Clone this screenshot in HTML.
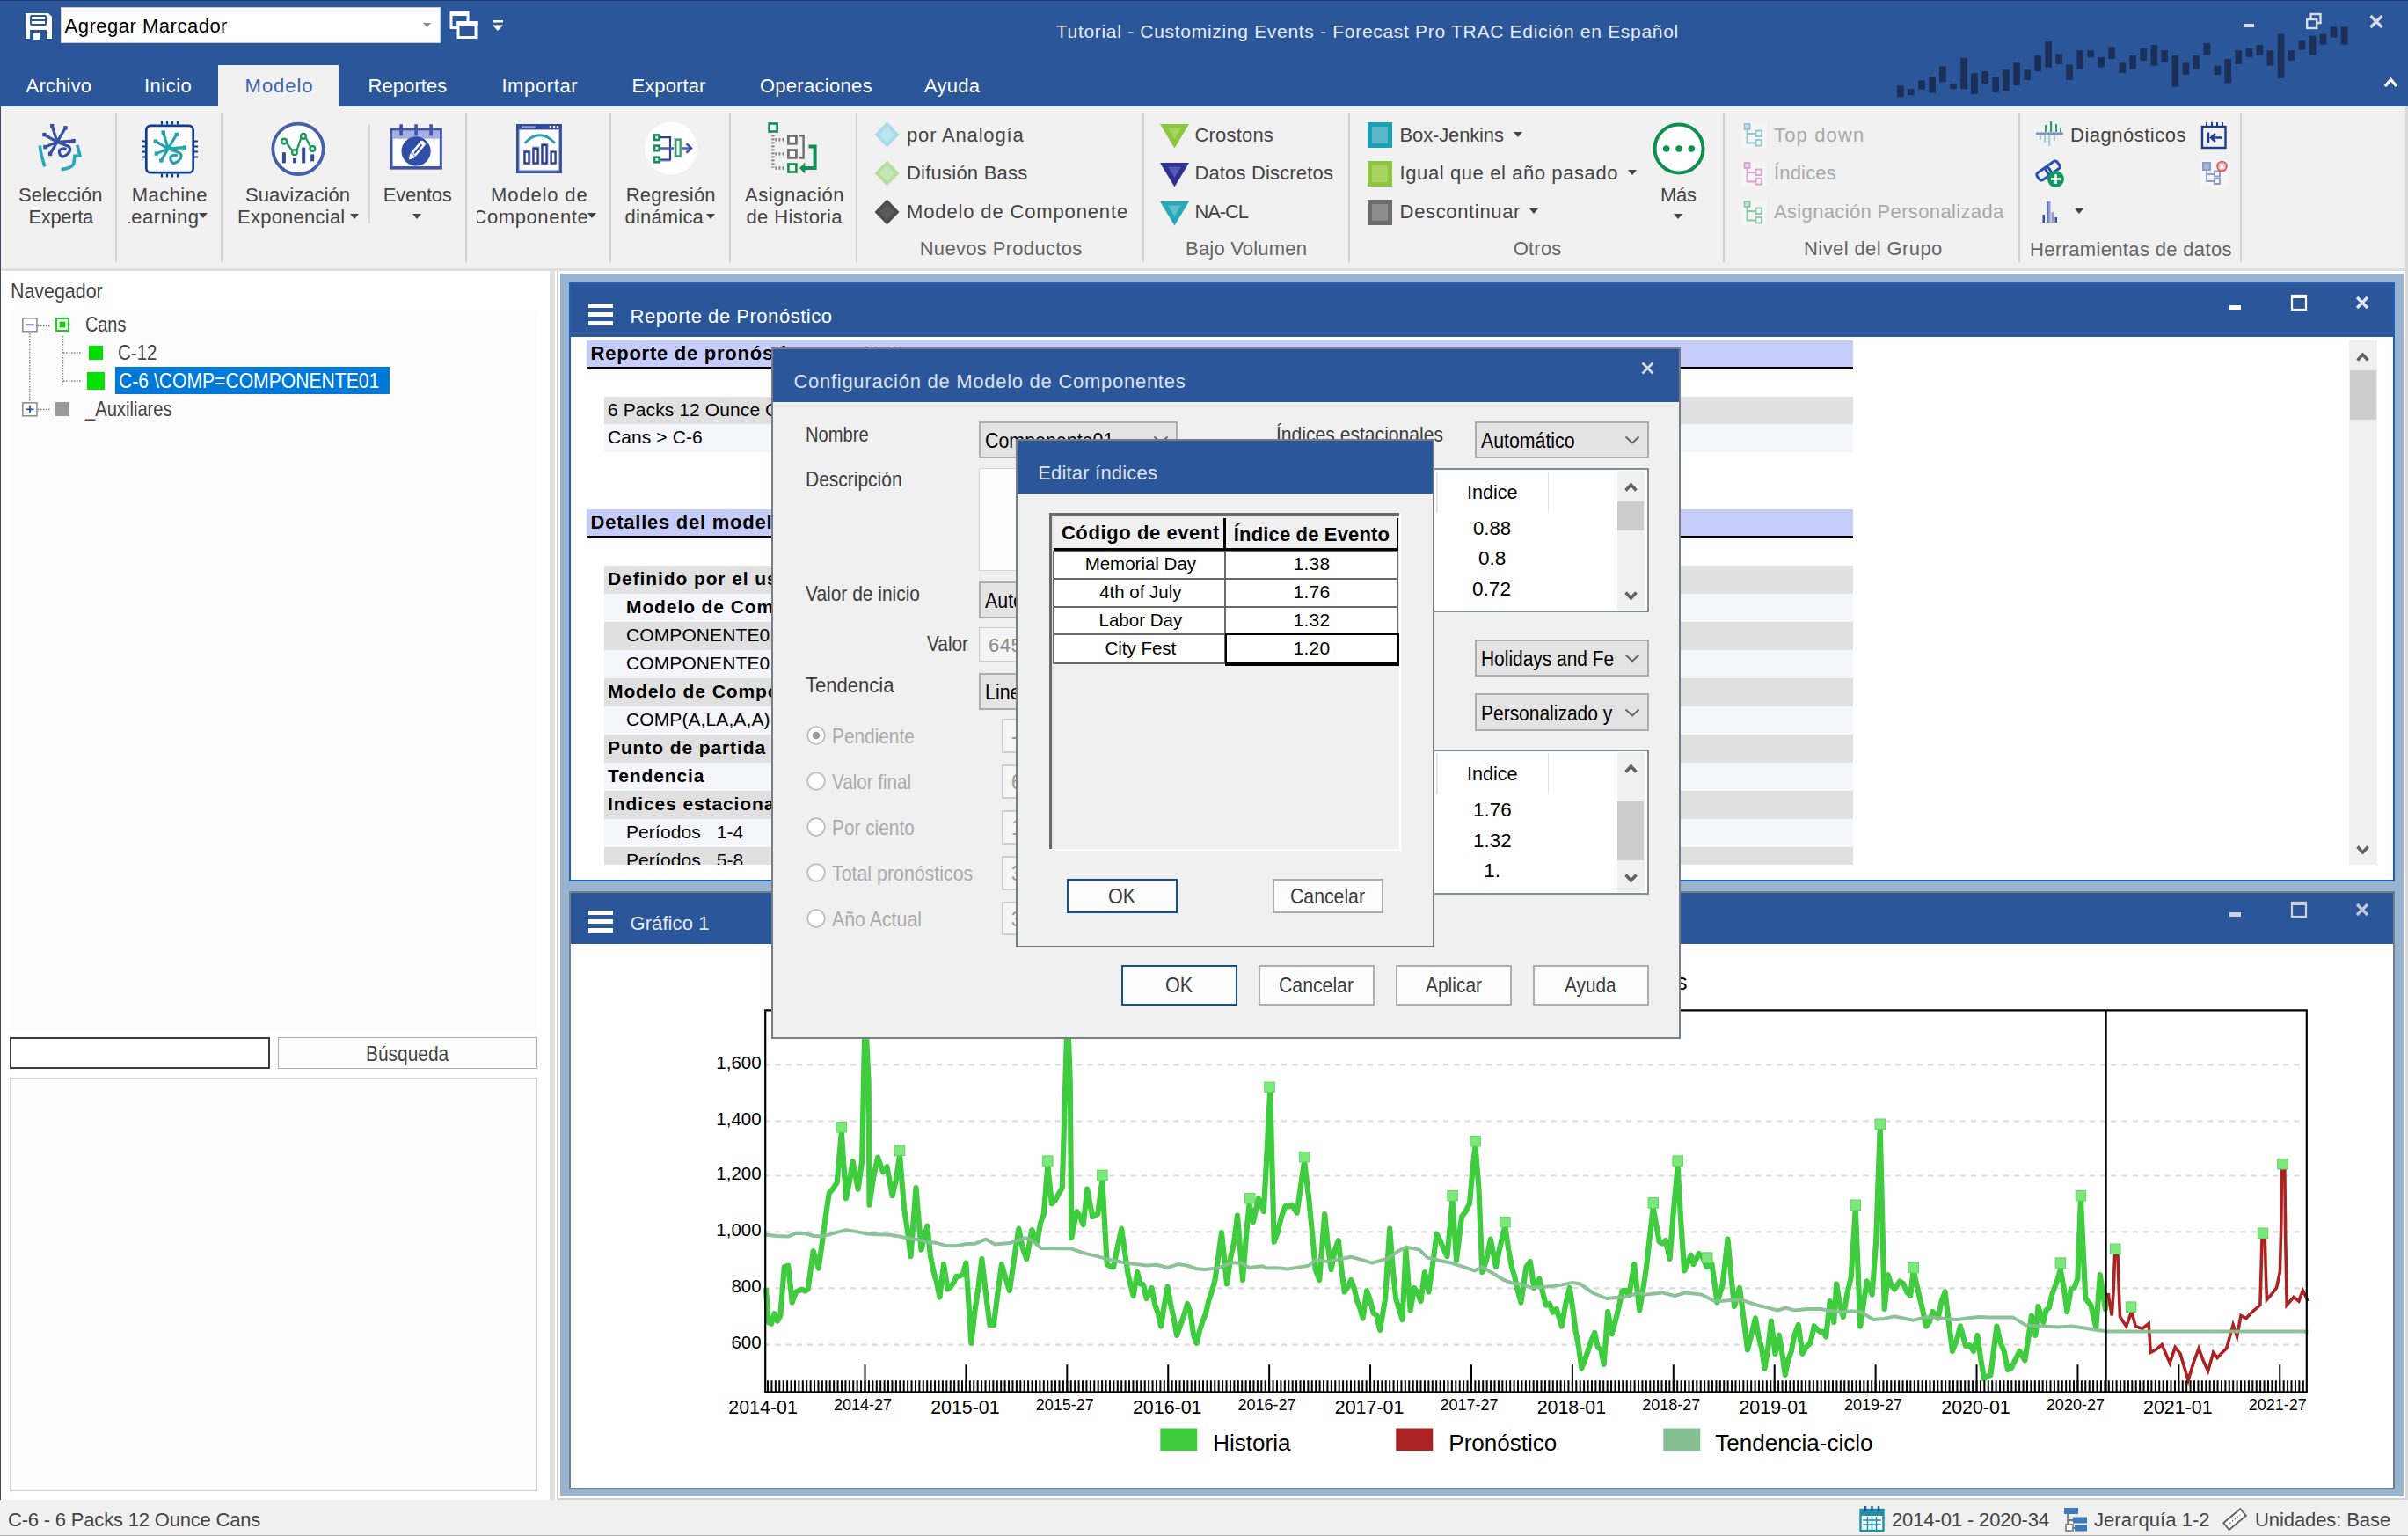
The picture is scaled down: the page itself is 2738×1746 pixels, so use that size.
<!DOCTYPE html>
<html><head><meta charset="utf-8"><title>Forecast Pro TRAC</title>
<style>
html,body{margin:0;padding:0}
body{width:2738px;height:1746px;position:relative;overflow:hidden;background:#fff;font-family:"Liberation Sans",sans-serif;}
.a{position:absolute}
svg{display:block;overflow:visible}
</style></head><body>
<!-- p1_title -->
<div class="a" style="left:0px;top:0px;width:2738px;height:121px;background:#2B579A;"></div>
<div class="a" style="left:0px;top:0px;width:2738px;height:1px;background:#1E3E70;"></div>
<svg class="a" style="left:28px;top:14px" width="32" height="31" viewBox="0 0 32 31">
<path d="M1 1h26l4 4v25H1z" fill="#fff"/>
<rect x="6" y="3" width="19" height="12" rx="2" fill="#2B579A"/>
<rect x="8" y="5" width="15" height="3" fill="#fff"/><rect x="8" y="10" width="15" height="3" fill="#fff"/>
<rect x="6" y="20" width="19" height="11" fill="#2B579A"/><rect x="10" y="23" width="7" height="8" fill="#fff"/>
</svg>
<div class="a" style="left:69px;top:8px;width:432px;height:41px;background:#fff;box-sizing:border-box;border:1px solid #C6CCD8;"></div>
<div class="a" style="top:15px;font-size:22px;line-height:29px;color:#000;white-space:pre;letter-spacing:0.51px;left:73.5px;">Agregar Marcador</div>
<svg class="a" style="left:481px;top:25.500px" width="9" height="5"><path d="M0 0h9l-4.500 5z" fill="#8A8A8A"/></svg>
<svg class="a" style="left:511px;top:12px" width="33" height="33" viewBox="0 0 33 33">
<rect x="2" y="2.5" width="19" height="17" fill="none" stroke="#fff" stroke-width="3"/><rect x="1" y="1" width="21" height="5" fill="#fff"/>
<rect x="10" y="13.5" width="20" height="17" fill="#2B579A" stroke="#fff" stroke-width="3"/><rect x="8.5" y="12" width="23" height="5" fill="#fff"/>
</svg>
<svg class="a" style="left:559px;top:22px" width="14" height="14"><rect x="1" y="1" width="12" height="2.5" fill="#fff"/><path d="M1 6.5h12l-6 6.5z" fill="#fff"/></svg>
<div class="a" style="top:21.5px;font-size:21px;line-height:27px;color:#E6EAF1;white-space:pre;letter-spacing:0.7px;left:1200.75px;">Tutorial - Customizing Events - Forecast Pro TRAC Edición en Español</div>
<svg class="a" style="left:2118px;top:0" width="620" height="121" fill="#1B2F58"><rect x="39.1" y="97.3" width="7.7" height="12.9"/><rect x="51.0" y="101.2" width="7.7" height="7.0"/><rect x="63.1" y="91.4" width="7.7" height="10.3"/><rect x="75.2" y="87.5" width="7.7" height="18.0"/><rect x="87.0" y="75.4" width="7.7" height="18.0"/><rect x="99.1" y="95.3" width="7.7" height="5.9"/><rect x="111.2" y="65.7" width="7.7" height="35.5"/><rect x="123.1" y="83.2" width="7.7" height="23.7"/><rect x="135.2" y="81.1" width="7.7" height="14.2"/><rect x="147.3" y="87.5" width="7.7" height="17.5"/><rect x="159.1" y="79.3" width="7.7" height="23.7"/><rect x="171.2" y="71.3" width="7.7" height="25.7"/><rect x="183.3" y="79.3" width="7.7" height="11.6"/><rect x="195.2" y="63.1" width="7.7" height="18.0"/><rect x="207.3" y="47.1" width="7.7" height="29.6"/><rect x="219.4" y="61.3" width="7.7" height="11.6"/><rect x="231.2" y="73.4" width="7.7" height="17.5"/><rect x="243.3" y="57.2" width="7.7" height="21.4"/><rect x="255.4" y="57.2" width="7.7" height="8.0"/><rect x="267.3" y="65.1" width="7.7" height="11.6"/><rect x="279.4" y="53.3" width="7.7" height="13.6"/><rect x="291.5" y="71.3" width="7.7" height="11.6"/><rect x="303.3" y="63.1" width="7.7" height="15.4"/><rect x="315.4" y="54.8" width="7.7" height="14.2"/><rect x="327.5" y="51.0" width="7.7" height="23.7"/><rect x="339.3" y="57.2" width="7.7" height="13.6"/><rect x="351.5" y="63.1" width="7.7" height="35.5"/><rect x="363.6" y="71.3" width="7.7" height="13.6"/><rect x="375.4" y="63.1" width="7.7" height="15.4"/><rect x="387.5" y="48.9" width="7.7" height="13.6"/><rect x="399.6" y="74.7" width="7.7" height="10.3"/><rect x="411.4" y="66.9" width="7.7" height="27.8"/><rect x="423.5" y="57.2" width="7.7" height="15.7"/><rect x="435.6" y="54.8" width="7.7" height="10.0"/><rect x="447.5" y="51.0" width="7.7" height="11.6"/><rect x="459.6" y="57.2" width="7.7" height="17.5"/><rect x="471.7" y="38.6" width="7.7" height="50.2"/><rect x="483.5" y="57.2" width="7.7" height="11.6"/><rect x="495.6" y="46.3" width="7.7" height="10.3"/><rect x="507.7" y="40.7" width="7.7" height="21.9"/><rect x="519.6" y="38.6" width="7.7" height="12.1"/><rect x="531.7" y="30.4" width="7.7" height="12.1"/><rect x="543.8" y="30.4" width="7.7" height="20.3"/></svg>
<div class="a" style="left:2551px;top:26.5px;width:12px;height:4.5px;background:#D8DCE4;"></div>
<svg class="a" style="left:2621px;top:14px" width="20" height="20"><rect x="6.5" y="2" width="11" height="10" fill="none" stroke="#D8DCE4" stroke-width="2.4"/><rect x="2.2" y="8" width="11" height="10" fill="#2B579A" stroke="#D8DCE4" stroke-width="2.4"/></svg>
<svg class="a" style="left:2694px;top:17px" width="16" height="15"><path d="M1.5 1l13 13M14.5 1l-13 13" stroke="#D8DCE4" stroke-width="3.2"/></svg>
<svg class="a" style="left:2711px;top:88px" width="15" height="11"><path d="M1 10l6.5-7.5 6.500 7.5" fill="none" stroke="#fff" stroke-width="3.4"/></svg>
<div class="a" style="left:247.5px;top:73.5px;width:137.5px;height:48px;background:#F1F1F1;"></div>
<div class="a" style="top:83px;font-size:22px;line-height:29px;color:#fff;white-space:pre;letter-spacing:0.19px;left:29.6px;">Archivo</div>
<div class="a" style="top:83px;font-size:22px;line-height:29px;color:#fff;white-space:pre;letter-spacing:0.49px;left:164px;">Inicio</div>
<div class="a" style="top:83px;font-size:22px;line-height:29px;color:#3B66B0;white-space:pre;letter-spacing:0.97px;left:278.6px;">Modelo</div>
<div class="a" style="top:83px;font-size:22px;line-height:29px;color:#fff;white-space:pre;letter-spacing:0.1px;left:418.4px;">Reportes</div>
<div class="a" style="top:83px;font-size:22px;line-height:29px;color:#fff;white-space:pre;letter-spacing:0.61px;left:570.4px;">Importar</div>
<div class="a" style="top:83px;font-size:22px;line-height:29px;color:#fff;white-space:pre;letter-spacing:0.13px;left:718.4px;">Exportar</div>
<div class="a" style="top:83px;font-size:22px;line-height:29px;color:#fff;white-space:pre;letter-spacing:0.3px;left:863.9px;">Operaciones</div>
<div class="a" style="top:83px;font-size:22px;line-height:29px;color:#fff;white-space:pre;letter-spacing:0.24px;left:1051px;">Ayuda</div>
<!-- p2_ribbon -->
<div class="a" style="left:0px;top:121px;width:2738px;height:184px;background:#F1F1F1;"></div>
<div class="a" style="left:0px;top:305px;width:2738px;height:3.7px;background:linear-gradient(#E2E2E2,#D6D6D6);"></div>
<div class="a" style="left:131px;top:128px;width:2px;height:170px;background:#D2D2D2;"></div>
<div class="a" style="left:251px;top:128px;width:2px;height:170px;background:#D2D2D2;"></div>
<div class="a" style="left:529.4px;top:128px;width:2px;height:170px;background:#D2D2D2;"></div>
<div class="a" style="left:692.8px;top:128px;width:2px;height:170px;background:#D2D2D2;"></div>
<div class="a" style="left:829px;top:128px;width:2px;height:170px;background:#D2D2D2;"></div>
<div class="a" style="left:973px;top:128px;width:2px;height:170px;background:#D2D2D2;"></div>
<div class="a" style="left:1299px;top:128px;width:2px;height:170px;background:#D2D2D2;"></div>
<div class="a" style="left:1533px;top:128px;width:2px;height:170px;background:#D2D2D2;"></div>
<div class="a" style="left:1959px;top:128px;width:2px;height:170px;background:#D2D2D2;"></div>
<div class="a" style="left:2295px;top:128px;width:2px;height:170px;background:#D2D2D2;"></div>
<div class="a" style="left:2546.8px;top:128px;width:2px;height:170px;background:#D2D2D2;"></div>
<div class="a" style="left:419px;top:141px;width:2px;height:113px;background:#D8D8D8;"></div>
<div class="a" style="top:206.5px;font-size:22px;line-height:29px;color:#444;white-space:pre;letter-spacing:0.02px;left:21px;">Selección</div>
<div class="a" style="top:232.3px;font-size:22px;line-height:29px;color:#444;white-space:pre;letter-spacing:-0.36px;left:32.5px;">Experta</div>
<div class="a" style="top:206.5px;font-size:22px;line-height:29px;color:#444;white-space:pre;letter-spacing:0.43px;left:149.8px;">Machine</div>
<div class="a" style="top:206.5px;font-size:22px;line-height:29px;color:#444;white-space:pre;letter-spacing:0.03px;left:279px;">Suavización</div>
<div class="a" style="top:232.3px;font-size:22px;line-height:29px;color:#444;white-space:pre;letter-spacing:0.24px;left:270px;">Exponencial</div>
<div class="a" style="top:206.5px;font-size:22px;line-height:29px;color:#444;white-space:pre;letter-spacing:-0.23px;left:435.7px;">Eventos</div>
<div class="a" style="top:206.5px;font-size:22px;line-height:29px;color:#444;white-space:pre;letter-spacing:0.86px;left:558px;">Modelo de</div>
<div class="a" style="top:206.5px;font-size:22px;line-height:29px;color:#444;white-space:pre;letter-spacing:0.2px;left:711.7px;">Regresión</div>
<div class="a" style="top:232.3px;font-size:22px;line-height:29px;color:#444;white-space:pre;letter-spacing:0.17px;left:710.6px;">dinámica</div>
<div class="a" style="top:206.5px;font-size:22px;line-height:29px;color:#444;white-space:pre;letter-spacing:0.54px;left:847px;">Asignación</div>
<div class="a" style="top:232.3px;font-size:22px;line-height:29px;color:#444;white-space:pre;letter-spacing:0.38px;left:848.5px;">de Historia</div>
<div class="a" style="top:206.5px;font-size:22px;line-height:29px;color:#444;white-space:pre;letter-spacing:-0.29px;left:1888px;">Más</div>
<div class="a" style="left:144.5px;top:232px;width:82px;height:30px;overflow:hidden"><div class="a" style="right:0;top:0;font-size:22px;line-height:29px;color:#444;white-space:pre;letter-spacing:0.55px">Learning</div></div>
<div class="a" style="left:542px;top:232px;width:127px;height:30px;overflow:hidden"><div class="a" style="right:-12px;top:0;font-size:22px;line-height:29px;color:#444;white-space:pre;letter-spacing:0.6px">Componentes</div></div>
<svg class="a" style="left:226px;top:241.5px" width="10" height="6"><path d="M0 0h10l-5 6z" fill="#444"/></svg>
<svg class="a" style="left:397.5px;top:242.6px" width="10" height="6"><path d="M0 0h10l-5 6z" fill="#444"/></svg>
<svg class="a" style="left:468.6px;top:242.6px" width="10" height="6"><path d="M0 0h10l-5 6z" fill="#444"/></svg>
<svg class="a" style="left:667.5px;top:241.5px" width="10" height="6"><path d="M0 0h10l-5 6z" fill="#444"/></svg>
<svg class="a" style="left:803px;top:242.6px" width="10" height="6"><path d="M0 0h10l-5 6z" fill="#444"/></svg>
<svg class="a" style="left:1902.6px;top:242.6px" width="10" height="6"><path d="M0 0h10l-5 6z" fill="#444"/></svg>
<div class="a" style="top:138.5px;font-size:22px;line-height:29px;color:#444;white-space:pre;letter-spacing:0.83px;left:1031px;">por Analogía</div>
<div class="a" style="top:181.8px;font-size:22px;line-height:29px;color:#444;white-space:pre;letter-spacing:0.23px;left:1031px;">Difusión Bass</div>
<div class="a" style="top:225.5px;font-size:22px;line-height:29px;color:#444;white-space:pre;letter-spacing:0.86px;left:1031px;">Modelo de Componente</div>
<div class="a" style="top:268px;font-size:22px;line-height:29px;color:#666;white-space:pre;letter-spacing:0.33px;left:1045.64px;">Nuevos Productos</div>
<svg class="a" style="left:994px;top:138px" width="29" height="30"><path d="M14.500 0.500L28.500 15 14.500 29.500 0.500 15z" fill="#A8DCEB"/><path d="M14.500 6L23 15 14.500 24 6 15z" fill="#BCE6F1"/></svg>
<svg class="a" style="left:994px;top:182px" width="29" height="30"><path d="M14.500 0.500L28.500 15 14.500 29.500 0.500 15z" fill="#B7DDA2"/><path d="M14.500 6L23 15 14.500 24 6 15z" fill="#C6E6B4"/></svg>
<svg class="a" style="left:994px;top:226px" width="29" height="30"><path d="M14.500 0.500L28.500 15 14.500 29.500 0.500 15z" fill="#4D4D4D"/><path d="M14.500 6L23 15 14.500 24 6 15z" fill="#5A5A5A"/></svg>
<svg class="a" style="left:1319px;top:141.3px" width="33" height="28"><path d="M0 0h33L16.500 27.500z" fill="#8DC63F"/><path d="M9 4.500h15L16.500 17z" fill="#A5D45F"/></svg>
<svg class="a" style="left:1319px;top:185.3px" width="33" height="28"><path d="M0 0h33L16.500 27.500z" fill="#2E3192"/><path d="M9 4.500h15L16.500 17z" fill="#5558B5"/></svg>
<svg class="a" style="left:1319px;top:229px" width="33" height="28"><path d="M0 0h33L16.500 27.500z" fill="#27AAB8"/><path d="M9 4.500h15L16.500 17z" fill="#5BC2CC"/></svg>
<div class="a" style="top:138.5px;font-size:22px;line-height:29px;color:#444;white-space:pre;letter-spacing:0.2px;left:1358.4px;">Crostons</div>
<div class="a" style="top:181.8px;font-size:22px;line-height:29px;color:#444;white-space:pre;letter-spacing:0.16px;left:1358.4px;">Datos Discretos</div>
<div class="a" style="top:225.5px;font-size:22px;line-height:29px;color:#444;white-space:pre;letter-spacing:-1.08px;left:1358.4px;">NA-CL</div>
<div class="a" style="top:268.2px;font-size:22px;line-height:29px;color:#666;white-space:pre;letter-spacing:0.19px;left:1348.07px;">Bajo Volumen</div>
<div class="a" style="left:1554.6px;top:139px;width:28.5px;height:28.5px;background:#1BA1B5;"></div>
<div class="a" style="left:1559.6px;top:144px;width:18.5px;height:18.5px;background:#5BB8C8;"></div>
<div class="a" style="left:1554.6px;top:183px;width:28.5px;height:28.5px;background:#8DC63F;"></div>
<div class="a" style="left:1559.6px;top:188px;width:18.5px;height:18.5px;background:#A6D363;"></div>
<div class="a" style="left:1554.6px;top:227px;width:28.5px;height:28.5px;background:#6D6D6D;"></div>
<div class="a" style="left:1559.6px;top:232px;width:18.5px;height:18.5px;background:#8C8C8C;"></div>
<div class="a" style="top:138.5px;font-size:22px;line-height:29px;color:#444;white-space:pre;letter-spacing:-0.15px;left:1591.6px;">Box-Jenkins</div>
<div class="a" style="top:181.8px;font-size:22px;line-height:29px;color:#444;white-space:pre;letter-spacing:0.59px;left:1591.6px;">Igual que el año pasado</div>
<div class="a" style="top:225.5px;font-size:22px;line-height:29px;color:#444;white-space:pre;letter-spacing:0.65px;left:1591.6px;">Descontinuar</div>
<svg class="a" style="left:1721px;top:149.5px" width="10" height="6"><path d="M0 0h10l-5 6z" fill="#444"/></svg>
<svg class="a" style="left:1851px;top:193px" width="10" height="6"><path d="M0 0h10l-5 6z" fill="#444"/></svg>
<svg class="a" style="left:1739px;top:237px" width="10" height="6"><path d="M0 0h10l-5 6z" fill="#444"/></svg>
<div class="a" style="top:268.2px;font-size:22px;line-height:29px;color:#666;white-space:pre;letter-spacing:0.24px;left:1720.63px;">Otros</div>
<svg class="a" style="left:1878px;top:138px" width="62" height="62"><circle cx="31" cy="31" r="27.500" fill="#fff" stroke="#0E8F4F" stroke-width="4"/><circle cx="16.700" cy="31" r="3.800" fill="#0E8F4F"/><circle cx="31" cy="31" r="3.800" fill="#0E8F4F"/><circle cx="45.300" cy="31" r="3.800" fill="#0E8F4F"/></svg>
<div class="a" style="top:138.5px;font-size:22px;line-height:29px;color:#A9A9A9;white-space:pre;letter-spacing:1.15px;left:2017px;">Top down</div>
<div class="a" style="top:181.8px;font-size:22px;line-height:29px;color:#A9A9A9;white-space:pre;letter-spacing:0.18px;left:2017px;">Índices</div>
<div class="a" style="top:225.5px;font-size:22px;line-height:29px;color:#A9A9A9;white-space:pre;letter-spacing:0.35px;left:2017px;">Asignación Personalizada</div>
<div class="a" style="top:268.2px;font-size:22px;line-height:29px;color:#666;white-space:pre;letter-spacing:0.4px;left:2051.09px;">Nivel del Grupo</div>
<svg class="a" style="left:1980px;top:139px" width="29" height="29" fill="none" stroke="#8CC7D3" stroke-width="1.800"><rect x="0" y="0" width="29" height="29" fill="#F5F5F5" stroke="none"/><rect x="3.500" y="2" width="6" height="6" fill="#8CC7D3" fill-opacity=".35"/><path d="M6.500 8v15.500h10M6.500 13h10"/><rect x="16.500" y="9.500" width="6.500" height="6.500"/><rect x="16.500" y="20" width="6.500" height="6.500"/></svg>
<svg class="a" style="left:1980px;top:183px" width="29" height="29" fill="none" stroke="#DDA0D0" stroke-width="1.800"><rect x="0" y="0" width="29" height="29" fill="#F5F5F5" stroke="none"/><rect x="3.500" y="2" width="6" height="6" fill="#DDA0D0" fill-opacity=".35"/><path d="M6.500 8v15.500h10M6.500 13h10"/><rect x="16.500" y="9.500" width="6.500" height="6.500"/><rect x="16.500" y="20" width="6.500" height="6.500"/></svg>
<svg class="a" style="left:1980px;top:227px" width="29" height="29" fill="none" stroke="#8CC4A8" stroke-width="1.800"><rect x="0" y="0" width="29" height="29" fill="#F5F5F5" stroke="none"/><rect x="3.500" y="2" width="6" height="6" fill="#8CC4A8" fill-opacity=".35"/><path d="M6.500 8v15.500h10M6.500 13h10"/><rect x="16.500" y="9.500" width="6.500" height="6.500"/><rect x="16.500" y="20" width="6.500" height="6.500"/></svg>
<div class="a" style="top:138.5px;font-size:22px;line-height:29px;color:#444;white-space:pre;letter-spacing:0.5px;left:2354px;">Diagnósticos</div>
<div class="a" style="top:268.5px;font-size:22px;line-height:29px;color:#666;white-space:pre;letter-spacing:0.34px;left:2308.12px;">Herramientas de datos</div>
<svg class="a" style="left:2315px;top:137px" width="32" height="30">
<rect x="0" y="13.500" width="31" height="2.600" fill="#7F8FC0"/>
<g fill="#2E9E6B"><rect x="10" y="5" width="2" height="8"/><rect x="16" y="1" width="2.200" height="12"/><rect x="22" y="4" width="2" height="9"/><rect x="27" y="8" width="2" height="5"/></g>
<g fill="#9AD0DC"><rect x="4" y="17" width="2" height="5"/><rect x="9" y="17" width="2" height="8"/><rect x="14" y="17" width="2.200" height="12"/><rect x="20" y="17" width="2" height="6"/></g>
</svg>
<svg class="a" style="left:2502px;top:138px" width="31" height="32" fill="none" stroke="#1F3A93" stroke-width="2.400">
<rect x="2" y="6" width="26.500" height="24"/><path d="M7 1v5M13 1v5M19 1v5M25 1v5" stroke-width="2"/>
<path d="M9 12.500v12M25 18.500H12M17 14l-5 4.500 5 4.500"/></svg>
<svg class="a" style="left:2314px;top:180px" width="34" height="34" fill="none">
<g transform="rotate(-35 15 14)" stroke="#2A4FB0" stroke-width="3"><rect x="1" y="9" width="16" height="10" rx="3"/><rect x="13" y="9" width="16" height="10" rx="3"/></g>
<circle cx="23.500" cy="23.500" r="9.500" fill="#149660"/><path d="M23.500 18v11M18 23.500h11" stroke="#fff" stroke-width="2.400"/></svg>
<svg class="a" style="left:2502px;top:182px" width="32" height="30" fill="none" stroke="#8C9CCB" stroke-width="2">
<rect x="0" y="0" width="32" height="30" fill="#F6F6F6" stroke="none"/>
<rect x="3" y="3" width="8" height="8" fill="#AAB6DC"/><path d="M7 11v13h9M7 16h9"/><rect x="16" y="12.500" width="6" height="6"/><rect x="16" y="21" width="6" height="6"/>
<circle cx="24.500" cy="7" r="5.500" fill="#F0B4B4" stroke="#D06060" stroke-width="1.600"/><path d="M22 4.500l5 5M27 4.500l-5 5" stroke="#fff" stroke-width="1.600"/></svg>
<svg class="a" style="left:2322px;top:228px" width="18" height="25"><rect x="0.500" y="16" width="2.500" height="9" fill="#2A4FA0"/><rect x="5" y="1" width="4.500" height="24" fill="#8C9CCB"/><rect x="5" y="1" width="2" height="24" fill="#5A72B8"/><rect x="10.500" y="13" width="2.500" height="12" fill="#8C9CCB"/><rect x="14.500" y="19" width="2.500" height="6" fill="#2A4FA0"/></svg>
<svg class="a" style="left:2358.7px;top:237px" width="10" height="6"><path d="M0 0h10l-5 6z" fill="#444"/></svg>
<!-- p3_icons -->
<svg class="a" style="left:40px;top:139px" width="58" height="58" fill="none" stroke-linecap="butt" stroke-linejoin="miter">
<g stroke="#2AA6B4" stroke-width="3.600">
<path d="M5.300 26.300C6 35 8.500 43 10.900 50.300"/>
<path d="M47.800 25.900L51 38.200H45L43.700 47.500Q40.500 52.600 29.700 53.600"/>
</g><path d="M24.9 22.4L19.2 4.1M24.9 22.4L34.5 6.3M24.9 22.4L10.5 14.1M24.9 22.4L43.6 21.1M24.9 22.4L11.4 28.1M24.9 22.4L17 35.9M24.9 22.4L37.1 26.9Q41.4 29.4 38.7 33.9Q35.4 38.4 30.8 39.2Q26.7 36.4 27.6 31.7Q30.9 28.9 35.4 30.4" fill="none" stroke="#3550A6" stroke-width="3.2" stroke-linecap="butt" stroke-linejoin="round"/><rect x="17" y="1.9" width="4.400" height="4.400" fill="#3550A6" stroke="none"/><rect x="32.3" y="4.1" width="4.400" height="4.400" fill="#3550A6" stroke="none"/><rect x="8.3" y="11.9" width="4.400" height="4.400" fill="#3550A6" stroke="none"/><rect x="41.4" y="18.9" width="4.400" height="4.400" fill="#3550A6" stroke="none"/><rect x="9.2" y="25.9" width="4.400" height="4.400" fill="#3550A6" stroke="none"/><rect x="14.8" y="33.7" width="4.400" height="4.400" fill="#3550A6" stroke="none"/></svg>
<svg class="a" style="left:163px;top:138.500px" width="60" height="62" fill="none">
<g stroke="#0D3C91" stroke-width="2.200"><path d="M21 -1.500v4M21 58.600v4M-2 21.5h4M58 21.5h4"/><path d="M27 -1.500v4M27 58.600v4M-2 27.5h4M58 27.5h4"/><path d="M33 -1.500v4M33 58.600v4M-2 33.5h4M58 33.5h4"/><path d="M39 -1.500v4M39 58.600v4M-2 39.5h4M58 39.5h4"/></g>
<rect x="3.300" y="3.800" width="53.400" height="53.400" rx="5" fill="#fff" stroke="#0D3C91" stroke-width="2.700"/>
<path d="M28.3 29.9L22.6 11.6M28.3 29.9L37.9 13.8M28.3 29.9L13.9 21.6M28.3 29.9L47 28.6M28.3 29.9L14.8 35.6M28.3 29.9L20.4 43.4M28.3 29.9L40.5 34.4Q44.8 36.9 42.1 41.4Q38.8 45.9 34.2 46.7Q30.1 43.9 31 39.2Q34.3 36.4 38.8 37.9" fill="none" stroke="#27A3B0" stroke-width="3.2" stroke-linecap="butt" stroke-linejoin="round"/><rect x="20.4" y="9.4" width="4.400" height="4.400" fill="#27A3B0" stroke="none"/><rect x="35.7" y="11.6" width="4.400" height="4.400" fill="#27A3B0" stroke="none"/><rect x="11.7" y="19.4" width="4.400" height="4.400" fill="#27A3B0" stroke="none"/><rect x="44.8" y="26.4" width="4.400" height="4.400" fill="#27A3B0" stroke="none"/><rect x="12.6" y="33.4" width="4.400" height="4.400" fill="#27A3B0" stroke="none"/><rect x="18.2" y="41.2" width="4.400" height="4.400" fill="#27A3B0" stroke="none"/></svg>
<svg class="a" style="left:307px;top:136.500px" width="64" height="64" fill="none">
<circle cx="32" cy="32.300" r="28.700" stroke="#4660AA" stroke-width="3.800" fill="#fff"/>
<g fill="#2F4C9E"><rect x="13.900" y="36.200" width="4" height="12.200"/><rect x="26.100" y="42.800" width="4" height="5.600"/><rect x="36.200" y="30.600" width="4" height="17.800"/><rect x="46.200" y="38.400" width="4" height="8"/></g>
<path d="M16.100 23.600C21 25 23 34 27.900 36.200C33 34 33 19 37.900 17.900C43 19 43.500 29 48.400 31.900" stroke="#1F9960" stroke-width="2.400"/>
<g fill="#E8FBF0" stroke="#1F9960" stroke-width="2.400"><circle cx="16.100" cy="23.600" r="2.900"/><circle cx="27.900" cy="36.200" r="2.900"/><circle cx="37.900" cy="17.900" r="2.900"/><circle cx="48.400" cy="31.900" r="2.900"/></g></svg>
<svg class="a" style="left:442px;top:139px" width="62" height="56" fill="none">
<rect x="3" y="8.200" width="56.300" height="43.700" fill="#fff" stroke="#3F55A8" stroke-width="3"/>
<rect x="4.500" y="9.700" width="53.300" height="9" fill="#A6AEDF"/>
<rect x="1.500" y="50" width="59.300" height="3.400" fill="#3F55A8"/>
<path d="M14.100 2.300v13M31.100 2.300v13M48.100 2.300v13" stroke="#3F55A8" stroke-width="3.600"/>
<circle cx="31.100" cy="32.900" r="16.600" fill="#2F4FA8"/>
<g transform="rotate(40 31.100 32.900)"><rect x="27.600" y="18.900" width="7" height="21" rx="2.200" fill="#fff"/><path d="M27.600 39.500l3.500 6 3.500-6z" fill="#fff"/><rect x="30.100" y="23" width="2" height="13" fill="#2F4FA8"/><rect x="27.600" y="37.300" width="7" height="1.400" fill="#2F4FA8" fill-opacity=".5"/></g></svg>
<svg class="a" style="left:586px;top:140px" width="55" height="58" fill="none">
<rect x="2.700" y="2.800" width="48.500" height="52.500" fill="#fff" stroke="#2F4C9E" stroke-width="3.400"/>
<rect x="4.400" y="7" width="45.100" height="46.600" fill="none" stroke="#A6B0E6" stroke-width="1.400"/>
<rect x="1" y="1.100" width="51.900" height="6" fill="#2F4C9E"/>
<rect x="7" y="3.300" width="15.800" height="1.700" fill="#8E9ADB"/><rect x="38.800" y="3" width="2.200" height="2.200" fill="#fff"/><rect x="42.900" y="3" width="2.200" height="2.200" fill="#fff"/><rect x="46.900" y="3" width="2.200" height="2.200" fill="#fff"/>
<path d="M10.600 22.700Q27.800 5 45 22.700" stroke="#2AA0B0" stroke-width="3"/>
<g fill="#B4BCF2"><rect x="9.300" y="30.400" width="8.400" height="16.300"/><rect x="19.300" y="26.500" width="8.400" height="20.200"/><rect x="29.300" y="22.600" width="8.400" height="24.100"/></g>
<g stroke="#2F3F8F" stroke-width="2.400" fill="#fff"><rect x="10.500" y="32.600" width="5" height="12.900"/><rect x="20.500" y="28.700" width="5" height="16.800"/><rect x="30.500" y="24.800" width="5" height="20.700"/><rect x="40.600" y="32.600" width="5" height="12.900"/></g></svg>
<svg class="a" style="left:731px;top:137px" width="64" height="64" fill="none">
<circle cx="32" cy="31.600" r="29.800" fill="#fff"/>
<path d="M19 33h35" stroke="#B4BCF2" stroke-width="2"/><path d="M19 46h12" stroke="#B4BCF2" stroke-width="2"/>
<g stroke="#2F3F8F" stroke-width="2.200"><path d="M19 19.200h12v25.300H19"/></g>
<path d="M19 31.400h34" stroke="#4A5AB0" stroke-width="2.200"/><path d="M49.500 26.200l5.500 5.200-5.500 5.200" stroke="#3F50A8" stroke-width="2.600"/>
<rect x="34.900" y="20" width="10.200" height="22.400" fill="#BFDCCD"/>
<rect x="37.400" y="21.800" width="5.200" height="18.600" fill="#EFFFFA" stroke="#3D9970" stroke-width="2.200"/>
<g fill="#D9F5E6" stroke="#1F8A5F" stroke-width="2.600"><rect x="13" y="16.400" width="5.600" height="5.600"/><rect x="13" y="28.600" width="5.600" height="5.600"/><rect x="13" y="41.700" width="5.600" height="5.600"/></g></svg>
<svg class="a" style="left:872px;top:138px" width="60" height="62" fill="none">
<rect x="2.600" y="2.500" width="9" height="9" fill="#F2FFFA" stroke="#168A50" stroke-width="2.600"/>
<path d="M6.900 15.500v37" stroke="#7A7A7A" stroke-width="3.400" stroke-dasharray="1.800 2.200"/>
<path d="M9.500 20.800h12M9.500 36.900h12M9.500 53h12" stroke="#7A7A7A" stroke-width="3.400" stroke-dasharray="1.800 2.200"/>
<rect x="24.400" y="16.500" width="9" height="8.700" fill="#fff" stroke="#6E6E6E" stroke-width="2.800"/>
<rect x="24.400" y="32.600" width="9" height="8.700" fill="#fff" stroke="#6E6E6E" stroke-width="2.800"/>
<path d="M37 16.300h4.600v25.200H37" stroke="#6E6E6E" stroke-width="2.400"/>
<rect x="24.400" y="48.500" width="9" height="9" fill="#F2FFFA" stroke="#168A50" stroke-width="2.600"/>
<path d="M47.500 28.600h7.100v24.400H42" stroke="#0E9050" stroke-width="4"/>
<path d="M37 53l6.300-6.500v13z" fill="#0E9050"/></svg>
<!-- p4_main -->
<div class="a" style="left:0px;top:308px;width:625.5px;height:1397px;background:#fff;"></div>
<div class="a" style="left:0px;top:121px;width:1px;height:1625px;background:#3A4A66;"></div>
<div class="a" style="left:11.7px;top:314.8px;font-size:24px;line-height:31px;color:#444;white-space:pre;transform:scaleX(0.8917);transform-origin:0 50%;">Navegador</div>
<div class="a" style="left:11px;top:353px;width:600px;height:818px;background:#FCFCFC;"></div>
<svg class="a" style="left:20px;top:355px" width="120" height="125" fill="none" stroke="#808080" stroke-width="1.400" stroke-dasharray="1.500 1.500"><path d="M13.800 24v78M23 15.500h14M51.500 27v56M52 46h20M52 78h20M23 110.500h14"/></svg>
<svg class="a" style="left:25px;top:361.2px" width="18" height="17"><rect x="0.800" y="0.800" width="16.200" height="15" fill="#fff" stroke="#919191" stroke-width="1.600"/><path d="M4.500 8.300h9" stroke="#3B50A5" stroke-width="1.800"/></svg>
<svg class="a" style="left:25px;top:456.8px" width="18" height="17"><rect x="0.800" y="0.800" width="16.200" height="15" fill="#fff" stroke="#919191" stroke-width="1.600"/><path d="M4.500 8.300h9" stroke="#3B50A5" stroke-width="1.800"/><path d="M9 3.800v9" stroke="#3B50A5" stroke-width="1.800"/></svg>
<svg class="a" style="left:62.900px;top:360.800px" width="16" height="16"><rect x="1" y="1" width="14" height="14" fill="#fff" stroke="#1FCC1F" stroke-width="2"/><rect x="4.600" y="4.600" width="6.800" height="6.800" fill="#0FD00F"/></svg>
<div class="a" style="left:101.1px;top:393.4px;width:15.8px;height:15.6px;background:#00DD00;"></div>
<div class="a" style="left:99px;top:423.1px;width:20px;height:19.8px;background:#00E200;"></div>
<div class="a" style="left:62.9px;top:457.2px;width:16px;height:15.6px;background:#9A9A9A;"></div>
<div class="a" style="left:97px;top:352.9px;font-size:24px;line-height:31px;color:#444;white-space:pre;transform:scaleX(0.8263);transform-origin:0 50%;">Cans</div>
<div class="a" style="left:134.4px;top:384.6px;font-size:24px;line-height:31px;color:#444;white-space:pre;transform:scaleX(0.8554);transform-origin:0 50%;">C-12</div>
<div class="a" style="left:130.9px;top:417px;width:311.7px;height:31.4px;background:#0078D7;"></div>
<div class="a" style="left:134.6px;top:416.7px;font-size:24px;line-height:31px;color:#fff;white-space:pre;transform:scaleX(0.8799);transform-origin:0 50%;">C-6 \COMP=COMPONENTE01</div>
<div class="a" style="left:97.2px;top:448.8px;font-size:24px;line-height:31px;color:#444;white-space:pre;transform:scaleX(0.8399);transform-origin:0 50%;">_Auxiliares</div>
<div class="a" style="left:11px;top:1179px;width:295.5px;height:35.5px;background:#fff;box-sizing:border-box;border:2px solid #3C3C3C;"></div>
<div class="a" style="left:315.5px;top:1179px;width:295px;height:35.5px;background:#FDFDFD;box-sizing:border-box;border:1.500px solid #ADADAD;"></div>
<div class="a" style="left:415.7px;top:1181.5px;font-size:24px;line-height:31px;color:#444;white-space:pre;transform:scaleX(0.8714);transform-origin:0 50%;">Búsqueda</div>
<div class="a" style="left:11px;top:1225px;width:600px;height:469.8px;background:#FDFDFD;box-sizing:border-box;border:1.800px solid #D0D0D0;"></div>
<div class="a" style="left:625.3px;top:308px;width:5.7px;height:1397px;background:#E2E2E2;"></div>
<div class="a" style="left:631px;top:308px;width:2px;height:1397px;background:#fff;"></div>
<div class="a" style="left:633px;top:308px;width:1.8px;height:1397px;background:#D2D2D2;"></div>
<div class="a" style="left:634.8px;top:308px;width:2.3px;height:1395px;background:#fff;"></div>
<div class="a" style="left:637px;top:311px;width:2095.7px;height:1389.8px;background:#99B4D1;"></div>
<div class="a" style="left:634.8px;top:1700.8px;width:2100px;height:2.3px;background:#fff;"></div>
<div class="a" style="left:633px;top:1703px;width:2102px;height:1.9px;background:#D2D2D2;"></div>
<div class="a" style="left:2732.7px;top:308px;width:2px;height:1395px;background:#fff;"></div>
<div class="a" style="left:2734.7px;top:121px;width:3.3px;height:1584px;background:#D9D9D9;"></div>
<div class="a" style="left:636.7px;top:308px;width:2098px;height:3px;background:#fff;"></div>
<div class="a" style="left:646.7px;top:320.7px;width:2076.3px;height:681px;background:#1C5FC0;"></div>
<div class="a" style="left:648.7px;top:322.5px;width:2072.3px;height:60.5px;background:#2B579A;"></div>
<div class="a" style="left:648.7px;top:383px;width:2072.3px;height:617px;background:#fff;"></div>
<div class="a" style="left:669px;top:344.6px;width:28px;height:5px;background:#fff;"></div><div class="a" style="left:669px;top:354.6px;width:28px;height:5px;background:#fff;"></div><div class="a" style="left:669px;top:364.6px;width:28px;height:5px;background:#fff;"></div>
<div class="a" style="top:345px;font-size:22px;line-height:29px;color:#fff;white-space:pre;letter-spacing:0.53px;left:716.5px;">Reporte de Pronóstico</div>
<div class="a" style="left:2535px;top:347px;width:12.5px;height:4.6px;background:#fff;"></div>
<svg class="a" style="left:2604px;top:333.8px" width="20" height="20"><rect x="2" y="2" width="16" height="16" fill="none" stroke="#fff" stroke-width="2.200"/><rect x="1" y="1" width="18" height="4" fill="#fff"/></svg>
<svg class="a" style="left:2678px;top:335.8px" width="16" height="16"><path d="M2 2l12 12M14 2l-12 12" stroke="#E4E8F0" stroke-width="3.200"/></svg>
<div class="a" style="left:667px;top:387px;width:1440px;height:30px;background:#C6CCFA;"></div>
<div class="a" style="left:667px;top:416.8px;width:1440px;height:2.2px;background:#000;"></div>
<div class="a" style="top:386.5px;font-size:22px;line-height:29px;color:#000;white-space:pre;font-weight:bold;letter-spacing:0.75px;left:671.6px;">Reporte de pronóstico para C-6</div>
<div class="a" style="left:667px;top:579px;width:1440px;height:30px;background:#C6CCFA;"></div>
<div class="a" style="left:667px;top:608.6px;width:1440px;height:2.2px;background:#000;"></div>
<div class="a" style="top:578.5px;font-size:22px;line-height:29px;color:#000;white-space:pre;font-weight:bold;letter-spacing:0.75px;left:671.6px;">Detalles del modelo</div>
<div class="a" style="left:648.700px;top:383px;width:2072.300px;height:600px;overflow:hidden"><div class="a" style="left:38.3px;top:68px;width:1420px;height:31px;background:#E0E0E0;"></div><div class="a" style="top:68.8px;font-size:21px;line-height:27px;color:#000;white-space:pre;letter-spacing:0.1px;left:42.3px;">6 Packs 12 Ounce Cans</div><div class="a" style="left:38.3px;top:99px;width:1420px;height:32px;background:#F5F5FC;"></div><div class="a" style="top:100.3px;font-size:21px;line-height:27px;color:#000;white-space:pre;letter-spacing:0.1px;left:42.3px;">Cans &gt; C-6</div><div class="a" style="left:38.3px;top:260px;width:1420px;height:32px;background:#E0E0E0;"></div><div class="a" style="top:260.8px;font-size:21px;line-height:27px;color:#000;white-space:pre;font-weight:bold;letter-spacing:0.9px;left:42.3px;">Definido por el usuario</div><div class="a" style="left:38.3px;top:292px;width:1420px;height:32px;background:#F5F5FC;"></div><div class="a" style="top:292.8px;font-size:21px;line-height:27px;color:#000;white-space:pre;font-weight:bold;letter-spacing:0.9px;left:63.3px;">Modelo de Componentes</div><div class="a" style="left:38.3px;top:324px;width:1420px;height:32px;background:#E0E0E0;"></div><div class="a" style="top:324.8px;font-size:21px;line-height:27px;color:#000;white-space:pre;letter-spacing:0.1px;left:63.3px;">COMPONENTE01</div><div class="a" style="left:38.3px;top:356px;width:1420px;height:32px;background:#F5F5FC;"></div><div class="a" style="top:356.8px;font-size:21px;line-height:27px;color:#000;white-space:pre;letter-spacing:0.1px;left:63.3px;">COMPONENTE01</div><div class="a" style="left:38.3px;top:388px;width:1420px;height:32px;background:#E0E0E0;"></div><div class="a" style="top:388.8px;font-size:21px;line-height:27px;color:#000;white-space:pre;font-weight:bold;letter-spacing:0.9px;left:42.3px;">Modelo de Componentes</div><div class="a" style="left:38.3px;top:420px;width:1420px;height:32px;background:#F5F5FC;"></div><div class="a" style="top:420.8px;font-size:21px;line-height:27px;color:#000;white-space:pre;letter-spacing:0.1px;left:63.3px;">COMP(A,LA,A,A)</div><div class="a" style="left:38.3px;top:452px;width:1420px;height:32px;background:#E0E0E0;"></div><div class="a" style="top:452.8px;font-size:21px;line-height:27px;color:#000;white-space:pre;font-weight:bold;letter-spacing:0.9px;left:42.3px;">Punto de partida</div><div class="a" style="left:38.3px;top:484px;width:1420px;height:32px;background:#F5F5FC;"></div><div class="a" style="top:484.8px;font-size:21px;line-height:27px;color:#000;white-space:pre;font-weight:bold;letter-spacing:0.9px;left:42.3px;">Tendencia</div><div class="a" style="left:38.3px;top:516px;width:1420px;height:32px;background:#E0E0E0;"></div><div class="a" style="top:516.8px;font-size:21px;line-height:27px;color:#000;white-space:pre;font-weight:bold;letter-spacing:0.9px;left:42.3px;">Indices estacionales</div><div class="a" style="left:38.3px;top:548px;width:1420px;height:32px;background:#F5F5FC;"></div><div class="a" style="top:548.8px;font-size:21px;line-height:27px;color:#000;white-space:pre;letter-spacing:0.1px;left:63.3px;">Períodos   1-4</div><div class="a" style="left:38.3px;top:580px;width:1420px;height:20px;background:#E0E0E0;"></div><div class="a" style="top:580.8px;font-size:21px;line-height:27px;color:#000;white-space:pre;letter-spacing:0.1px;left:63.3px;">Períodos   5-8</div></div>
<div class="a" style="left:2671px;top:387px;width:32px;height:596px;background:#F0F0F0;"></div>
<div class="a" style="left:2671.5px;top:421px;width:30px;height:55.5px;background:#CDCDCD;"></div>
<svg class="a" style="left:2679px;top:399.5px" width="15" height="12"><path d="M1.500 9.500l6-6.500 6 6.500" fill="none" stroke="#606060" stroke-width="3.400"/></svg>
<svg class="a" style="left:2679px;top:959.5px" width="15" height="12"><path d="M1.500 2.500l6 6.500 6-6.500" fill="none" stroke="#606060" stroke-width="3.400"/></svg>
<div class="a" style="left:646.8px;top:1013px;width:2076.2px;height:680px;background:#737D8C;"></div>
<div class="a" style="left:648.7px;top:1015px;width:2072.3px;height:57.5px;background:#2B579A;"></div>
<div class="a" style="left:648.8px;top:1072.5px;width:2072.2px;height:618.6px;background:#fff;"></div>
<div class="a" style="left:669px;top:1034.6px;width:28px;height:5px;background:#fff;"></div><div class="a" style="left:669px;top:1044.6px;width:28px;height:5px;background:#fff;"></div><div class="a" style="left:669px;top:1054.6px;width:28px;height:5px;background:#fff;"></div>
<div class="a" style="top:1034.5px;font-size:22px;line-height:29px;color:#E6EAF2;white-space:pre;letter-spacing:0.08px;left:716.5px;">Gráfico 1</div>
<div class="a" style="left:2535px;top:1037px;width:12.5px;height:4.6px;background:#CDD2DB;"></div>
<svg class="a" style="left:2604px;top:1023.8px" width="20" height="20"><rect x="2" y="2" width="16" height="16" fill="none" stroke="#CDD2DB" stroke-width="2.200"/><rect x="1" y="1" width="18" height="4" fill="#CDD2DB"/></svg>
<svg class="a" style="left:2678px;top:1025.8px" width="16" height="16"><path d="M2 2l12 12M14 2l-12 12" stroke="#C4C9D3" stroke-width="3.200"/></svg>
<div class="a" style="left:0px;top:1704.9px;width:2738px;height:41.1px;background:#F0F0F0;"></div>
<div class="a" style="left:0px;top:1744.8px;width:2738px;height:1.2px;background:#B4B4B4;"></div>
<div class="a" style="top:1713.2px;font-size:22px;line-height:29px;color:#444;white-space:pre;letter-spacing:-0.19px;left:9px;">C-6 - 6 Packs 12 Ounce Cans</div>
<div class="a" style="top:1713.2px;font-size:22px;line-height:29px;color:#444;white-space:pre;letter-spacing:-0.12px;left:2151px;">2014-01 - 2020-34</div>
<div class="a" style="top:1713.2px;font-size:22px;line-height:29px;color:#444;white-space:pre;letter-spacing:0.06px;left:2381px;">Jerarquía 1-2</div>
<div class="a" style="top:1713.2px;font-size:22px;line-height:29px;color:#444;white-space:pre;letter-spacing:-0.09px;left:2564px;">Unidades: Base</div>
<svg class="a" style="left:2114px;top:1711px" width="30" height="32" fill="none"><rect x="1.500" y="5" width="26" height="24" fill="#fff" stroke="#1F8FA8" stroke-width="2.400"/><rect x="1.500" y="5" width="26" height="7" fill="#1F8FA8"/><path d="M7 1v6M14.500 1v6M22 1v6" stroke="#2B579A" stroke-width="2.400"/><path d="M4 17h21M4 22h21M9.500 13v15M14.500 13v15M19.500 13v15" stroke="#1F8FA8" stroke-width="1.600"/></svg>
<svg class="a" style="left:2346px;top:1713px" width="28" height="29"><rect x="1" y="1" width="16" height="7" fill="#3F7ABB"/><path d="M5 8v16M5 15h6M5 24h8" stroke="#777" stroke-width="1.800" fill="none"/><rect x="11" y="11.500" width="16" height="7" fill="#3F7ABB"/><rect x="3" y="20" width="8" height="7" fill="#fff" stroke="#777" stroke-width="1.600"/><rect x="13" y="20.500" width="14" height="7" fill="#3F7ABB"/></svg>
<svg class="a" style="left:2527px;top:1713px" width="28" height="28" fill="none"><g transform="rotate(-40 14 14)"><rect x="1.500" y="9" width="25" height="10" stroke="#666" stroke-width="2" fill="#fff"/><path d="M6.500 14h15" stroke="#777" stroke-width="1.600" stroke-dasharray="1.600 2"/></g></svg>
<!-- p5_chart -->
<svg class="a" style="left:648.7px;top:1072.5px" width="2072" height="618" viewBox="0 0 2072 618" font-family="Liberation Sans, sans-serif">
<path d="M220 455.7H1967.8" stroke="#DCDCDC" stroke-width="2.200" stroke-dasharray="6.300 5.950"/>
<text x="216.6" y="460.1" font-size="20.500" text-anchor="end" fill="#000">600</text>
<path d="M220 391.4H1967.8" stroke="#DCDCDC" stroke-width="2.200" stroke-dasharray="6.300 5.950"/>
<text x="216.6" y="395.8" font-size="20.500" text-anchor="end" fill="#000">800</text>
<path d="M220 327.4H1967.8" stroke="#DCDCDC" stroke-width="2.200" stroke-dasharray="6.300 5.950"/>
<text x="216.6" y="331.8" font-size="20.500" text-anchor="end" fill="#000">1,000</text>
<path d="M220 263.5H1967.8" stroke="#DCDCDC" stroke-width="2.200" stroke-dasharray="6.300 5.950"/>
<text x="216.6" y="267.9" font-size="20.500" text-anchor="end" fill="#000">1,200</text>
<path d="M220 201.5H1967.8" stroke="#DCDCDC" stroke-width="2.200" stroke-dasharray="6.300 5.950"/>
<text x="216.6" y="205.9" font-size="20.500" text-anchor="end" fill="#000">1,400</text>
<path d="M220 137.4H1967.8" stroke="#DCDCDC" stroke-width="2.200" stroke-dasharray="6.300 5.950"/>
<text x="216.6" y="141.8" font-size="20.500" text-anchor="end" fill="#000">1,600</text>
<polyline points="221.8,391.0 224.8,430.0 228.1,431.6 231.5,420.3 234.9,428.7 238.3,422.5 242.8,367.1 247.2,365.6 251.7,407.5 256.2,395.5 259.6,394.0 263.0,392.7 266.3,394.5 269.7,392.5 275.7,349.1 281.7,368.6 286.2,337.1 289.9,308.9 293.7,283.2 298.2,278.1 302.7,271.2 307.8,214.3 313.1,289.2 316.9,269.8 320.6,247.2 326.6,278.7 331.1,247.2 334.7,75.0 338.6,157.4 339.5,296.7 344.3,264.6 349.1,242.7 355.1,259.2 359.6,253.2 365.6,286.2 369.8,268.6 374.0,239.7 379.1,301.2 382.8,325.6 386.5,355.1 392.5,277.2 398.5,347.6 402.0,333.4 405.4,320.6 409.0,355.1 412.5,372.1 416.0,384.8 419.5,401.5 424.0,364.1 428.5,392.5 431.8,389.9 435.2,385.2 438.6,377.8 442.0,377.5 445.7,376.0 449.4,362.6 455.4,453.9 459.4,417.6 463.4,390.6 467.4,358.1 471.9,397.1 476.4,433.0 480.9,433.0 485.4,397.1 489.9,364.1 494.4,380.1 498.9,394.0 502.4,369.9 505.9,345.4 509.4,323.6 513.8,345.9 518.3,358.1 524.3,325.1 530.3,338.6 534.1,317.2 537.8,307.1 542.3,251.7 546.8,295.2 550.8,291.6 554.8,284.1 558.8,277.2 564.8,75.0 567.8,157.4 569.3,334.1 575.3,304.1 579.0,309.9 582.7,319.1 587.2,278.7 593.2,310.1 599.2,307.1 604.3,268.2 609.7,364.1 613.5,366.8 617.2,367.1 621.7,344.4 626.2,323.6 629.9,349.6 633.7,376.0 639.7,400.0 644.2,373.0 647.6,386.4 651.1,387.2 654.6,403.0 660.6,391.0 664.1,409.8 667.6,419.5 671.1,434.5 674.9,410.1 678.6,389.5 682.1,409.6 685.6,425.4 689.1,444.9 693.1,433.5 697.1,422.6 701.1,409.0 704.6,419.1 708.1,444.5 711.6,453.9 715.0,439.6 718.5,428.8 722.0,420.0 725.5,404.7 729.0,394.8 732.5,382.0 736.3,355.4 740.0,328.1 746.0,386.5 750.0,357.3 754.0,340.3 758.0,308.6 764.0,382.0 767.7,334.4 771.5,295.2 776.0,316.1 781.9,289.2 787.9,304.1 791.6,235.5 795.2,166.4 799.7,338.6 803.9,327.3 808.1,309.8 812.3,298.2 816.0,298.4 819.8,296.7 825.7,305.6 829.9,276.0 834.1,247.2 839.2,289.2 843.0,328.0 846.7,370.0 851.2,382.0 857.2,307.1 860.9,343.3 864.7,370.0 868.7,348.2 872.8,337.1 876.2,368.5 879.7,395.5 883.4,390.2 887.2,382.0 890.5,390.5 893.9,405.1 897.3,413.9 900.6,425.5 905.1,394.0 908.9,404.9 912.6,419.6 916.4,422.2 920.1,438.9 926.1,403.0 931.2,323.6 934.6,367.4 938.1,403.0 941.8,414.9 945.6,427.0 949.5,347.6 954.6,416.5 959.1,391.0 962.8,396.0 966.5,406.0 971.0,373.0 975.5,395.5 980.0,364.6 984.5,329.6 988.5,337.1 992.5,346.9 996.5,355.1 1002.5,290.7 1007.0,359.6 1013.0,310.1 1017.5,304.2 1022.0,295.2 1025.3,257.7 1028.5,229.3 1032.4,277.2 1036.3,373.0 1041.1,359.5 1045.9,335.6 1051.9,367.1 1055.4,349.5 1058.9,334.3 1062.4,320.6 1066.1,346.5 1069.9,367.1 1073.4,379.0 1076.9,394.6 1080.4,407.5 1086.4,367.1 1090.9,361.1 1095.3,391.0 1101.3,380.5 1105.1,395.9 1108.8,410.5 1112.8,409.0 1116.8,418.7 1120.8,415.0 1126.8,434.5 1131.3,408.8 1135.8,391.0 1139.2,413.7 1142.5,439.5 1145.9,457.2 1149.3,482.4 1153.0,473.3 1156.8,462.0 1160.5,450.6 1164.2,441.9 1167.7,458.2 1171.2,460.9 1174.7,477.9 1179.2,418.0 1183.7,443.4 1187.7,428.8 1191.7,412.5 1195.7,394.0 1199.4,393.9 1203.2,400.0 1209.2,364.1 1215.2,416.5 1218.9,395.0 1222.7,370.0 1226.7,334.3 1230.7,299.7 1234.2,318.7 1237.6,338.6 1241.4,340.6 1245.1,337.1 1249.6,358.1 1254.1,300.7 1258.6,253.2 1262.3,316.1 1266.1,371.5 1269.8,363.0 1273.6,353.6 1276.6,364.1 1282.6,352.1 1287.1,356.4 1291.6,367.1 1297.5,364.1 1303.5,407.5 1309.5,388.0 1315.5,335.6 1319.3,376.4 1323.0,412.0 1329.0,391.0 1333.5,425.2 1338.0,461.4 1342.5,443.6 1347.0,425.5 1350.5,445.8 1354.0,459.4 1357.5,482.4 1361.2,460.1 1364.9,428.5 1369.4,465.9 1373.9,444.9 1377.4,465.8 1380.8,489.9 1384.3,472.5 1387.8,463.3 1391.3,444.9 1395.8,433.0 1400.3,465.9 1404.8,458.0 1409.3,453.9 1413.8,434.5 1417.1,438.0 1420.5,440.9 1423.9,440.9 1427.2,446.4 1431.7,406.0 1436.2,430.0 1439.2,386.5 1443.0,409.9 1446.7,424.0 1451.2,398.1 1455.7,379.0 1460.8,301.2 1466.2,434.5 1469.9,408.3 1473.7,383.5 1479.7,398.5 1484.2,337.1 1488.7,208.3 1493.7,415.0 1497.6,376.0 1501.4,387.8 1505.1,392.5 1511.1,383.5 1515.1,386.1 1519.1,395.6 1523.1,400.0 1526.7,371.5 1530.1,386.4 1533.6,401.5 1537.3,416.7 1541.1,434.5 1544.8,429.9 1548.6,418.0 1554.6,425.5 1558.6,406.1 1562.6,395.5 1566.8,430.6 1571.0,462.9 1575.5,451.3 1580.0,434.5 1586.0,456.9 1590.5,456.1 1595.0,462.9 1599.5,444.9 1603.2,471.8 1607.0,494.4 1610.7,491.6 1614.5,489.9 1617.9,461.7 1621.4,434.5 1625.6,453.3 1629.7,463.1 1633.9,483.9 1637.7,482.5 1641.4,474.9 1647.4,462.9 1653.4,473.4 1657.2,448.9 1660.9,422.5 1665.4,444.9 1668.4,412.0 1674.4,430.0 1677.6,416.1 1680.9,413.3 1684.1,398.8 1687.4,390.0 1690.6,381.3 1693.8,370.0 1697.6,390.6 1701.3,418.0 1705.8,392.5 1709.6,390.6 1713.3,380.5 1716.9,290.7 1722.3,403.0 1728.3,410.5 1734.3,436.0 1738.8,376.0 1744.8,415.0 1747.8,397.0" fill="none" stroke="#3FCC3F" stroke-width="6.200" stroke-linejoin="round"/>
<polyline points="1747.8,397.0 1752.3,422.5 1754.4,389.5 1755.6,352.1 1758.9,352.1 1760.1,389.5 1761.5,424.0 1768.7,434.5 1774.7,418.0 1779.2,434.5 1786.7,437.4 1794.2,431.5 1796.3,464.4 1802.7,461.1 1809.2,455.4 1818.2,476.4 1824.2,458.4 1830.1,465.9 1839.1,495.9 1845.1,475.9 1851.1,459.9 1856.4,474.1 1861.6,485.4 1867.6,464.4 1872.1,470.4 1877.3,464.9 1882.6,459.9 1890.1,433.0 1894.6,446.4 1899.0,422.5 1905.0,425.5 1910.3,419.8 1915.5,415.0 1920.9,410.5 1922.1,370.0 1923.0,334.1 1926.3,334.1 1927.2,370.0 1928.4,404.5 1933.9,398.2 1939.5,391.0 1943.4,373.0 1944.9,313.1 1945.5,254.7 1948.8,254.7 1949.7,332.6 1951.2,410.5 1959.0,401.5 1964.9,406.0 1969.4,394.0 1975.4,406.0" fill="none" stroke="#AA2222" stroke-width="3.600" stroke-linejoin="miter"/>
<polyline points="221.8,330.5 234.5,332.1 247.2,332.6 256.2,328.7 266.2,329.0 276.2,332.0 286.2,332.6 299.7,328.7 313.1,325.1 325.1,327.1 337.1,329.6 349.1,330.3 361.1,330.5 371.1,332.0 381.0,334.1 391.0,335.6 403.0,338.4 415.0,339.7 427.0,343.1 438.0,343.2 448.9,341.1 459.9,340.7 471.9,335.6 482.4,341.6 498.9,340.1 516.8,334.1 524.3,337.1 534.8,346.1 545.8,346.0 556.8,346.3 567.8,346.1 585.7,352.1 597.7,354.9 609.7,358.1 620.2,360.5 630.7,362.6 642.7,364.1 654.6,365.6 666.6,364.7 678.6,368.0 690.6,364.1 700.6,365.5 710.6,369.0 720.5,370.0 735.5,368.6 750.5,362.6 762.5,362.6 771.5,368.0 786.4,366.2 791.3,368.6 803.3,368.3 815.3,369.5 827.2,367.6 839.2,365.6 848.2,358.7 860.2,361.1 873.7,358.6 887.2,355.7 899.1,358.9 911.1,362.6 929.1,357.5 941.1,349.1 950.1,344.6 965.0,347.6 974.0,356.6 987.5,359.8 1001.0,362.6 1014.5,366.9 1027.9,371.5 1035.4,367.1 1048.2,374.3 1060.9,382.0 1070.9,385.7 1080.9,386.7 1090.9,390.4 1100.8,390.2 1110.8,389.4 1120.8,388.6 1138.8,385.0 1147.8,386.5 1162.7,397.0 1177.7,403.0 1188.2,402.0 1198.7,401.5 1213.7,397.0 1222.7,398.5 1240.6,396.4 1255.6,400.0 1267.6,396.4 1285.6,398.5 1300.5,406.0 1310.5,405.7 1320.5,404.8 1330.5,404.5 1348.5,410.5 1360.5,413.4 1372.4,416.5 1381.4,413.5 1391.3,416.5 1406.3,415.0 1421.3,415.0 1433.2,417.3 1445.2,418.6 1455.7,417.3 1466.2,418.0 1481.2,427.0 1493.1,425.9 1505.1,423.4 1515.6,425.5 1526.1,427.9 1541.1,424.0 1553.1,424.7 1565.0,426.2 1577.0,427.0 1589.0,425.3 1601.0,424.0 1613.0,424.4 1625.0,424.6 1639.9,424.6 1654.9,433.6 1672.9,434.5 1690.9,435.4 1705.8,434.5 1720.8,436.6 1735.8,438.9 1747.8,440.4 1975.4,440.4" fill="none" stroke="#86BF92" stroke-width="4" stroke-linejoin="round" stroke-opacity="0.95"/>
<rect x="302.1" y="202.6" width="11.500" height="11.500" fill="#7CE87C" stroke="#5ED85E" stroke-width="1"/>
<rect x="368.3" y="229.0" width="11.500" height="11.500" fill="#7CE87C" stroke="#5ED85E" stroke-width="1"/>
<rect x="536.6" y="240.9" width="11.500" height="11.500" fill="#7CE87C" stroke="#5ED85E" stroke-width="1"/>
<rect x="598.6" y="257.1" width="11.500" height="11.500" fill="#7CE87C" stroke="#5ED85E" stroke-width="1"/>
<rect x="766.4" y="283.5" width="11.500" height="11.500" fill="#7CE87C" stroke="#5ED85E" stroke-width="1"/>
<rect x="788.8" y="157.1" width="11.500" height="11.500" fill="#7CE87C" stroke="#5ED85E" stroke-width="1"/>
<rect x="828.4" y="236.4" width="11.500" height="11.500" fill="#7CE87C" stroke="#5ED85E" stroke-width="1"/>
<rect x="996.8" y="280.5" width="11.500" height="11.500" fill="#7CE87C" stroke="#5ED85E" stroke-width="1"/>
<rect x="1022.8" y="218.5" width="11.500" height="11.500" fill="#7CE87C" stroke="#5ED85E" stroke-width="1"/>
<rect x="1056.7" y="310.4" width="11.500" height="11.500" fill="#7CE87C" stroke="#5ED85E" stroke-width="1"/>
<rect x="1225.0" y="288.6" width="11.500" height="11.500" fill="#7CE87C" stroke="#5ED85E" stroke-width="1"/>
<rect x="1252.9" y="240.9" width="11.500" height="11.500" fill="#7CE87C" stroke="#5ED85E" stroke-width="1"/>
<rect x="1286.5" y="350.9" width="11.500" height="11.500" fill="#7CE87C" stroke="#5ED85E" stroke-width="1"/>
<rect x="1455.1" y="291.0" width="11.500" height="11.500" fill="#7CE87C" stroke="#5ED85E" stroke-width="1"/>
<rect x="1483.0" y="199.0" width="11.500" height="11.500" fill="#7CE87C" stroke="#5ED85E" stroke-width="1"/>
<rect x="1521.0" y="362.3" width="11.500" height="11.500" fill="#7CE87C" stroke="#5ED85E" stroke-width="1"/>
<rect x="1688.1" y="356.9" width="11.500" height="11.500" fill="#7CE87C" stroke="#5ED85E" stroke-width="1"/>
<rect x="1711.2" y="280.5" width="11.500" height="11.500" fill="#7CE87C" stroke="#5ED85E" stroke-width="1"/>
<rect x="1750.5" y="341.0" width="11.500" height="11.500" fill="#7CE87C" stroke="#5ED85E" stroke-width="1"/>
<rect x="1768.4" y="406.9" width="11.500" height="11.500" fill="#7CE87C" stroke="#5ED85E" stroke-width="1"/>
<rect x="1918.2" y="323.0" width="11.500" height="11.500" fill="#7CE87C" stroke="#5ED85E" stroke-width="1"/>
<rect x="1940.7" y="244.5" width="11.500" height="11.500" fill="#7CE87C" stroke="#5ED85E" stroke-width="1"/>
<path d="M221.2 509.3V75.3H1973.8V509.3" fill="none" stroke="#000" stroke-width="2.200"/>
<path d="M1745.6 75.3V509.3" stroke="#000" stroke-width="2.200"/>
<path d="M220.1 509.3H1974.9" stroke="#000" stroke-width="2.300"/>
<path d="M224.02 496.3V509.3M228.44 496.3V509.3M232.86 496.3V509.3M237.28 496.3V509.3M241.70 496.3V509.3M246.12 496.3V509.3M250.54 496.3V509.3M254.96 496.3V509.3M259.38 496.3V509.3M263.80 496.3V509.3M268.22 496.3V509.3M272.64 496.3V509.3M277.05 496.3V509.3M281.47 496.3V509.3M285.89 496.3V509.3M290.31 496.3V509.3M294.73 496.3V509.3M299.15 496.3V509.3M303.57 496.3V509.3M307.99 496.3V509.3M312.41 496.3V509.3M316.83 496.3V509.3M321.25 496.3V509.3M325.67 496.3V509.3M330.09 496.3V509.3M334.51 496.3V509.3M338.93 496.3V509.3M343.35 496.3V509.3M347.77 496.3V509.3M352.19 496.3V509.3M356.61 496.3V509.3M361.03 496.3V509.3M365.45 496.3V509.3M369.87 496.3V509.3M374.29 496.3V509.3M378.71 496.3V509.3M383.13 496.3V509.3M387.55 496.3V509.3M391.96 496.3V509.3M396.38 496.3V509.3M400.80 496.3V509.3M405.22 496.3V509.3M409.64 496.3V509.3M414.06 496.3V509.3M418.48 496.3V509.3M422.90 496.3V509.3M427.32 496.3V509.3M431.74 496.3V509.3M436.16 496.3V509.3M440.58 496.3V509.3M445.00 496.3V509.3M449.42 496.3V509.3M453.84 496.3V509.3M458.26 496.3V509.3M462.68 496.3V509.3M467.10 496.3V509.3M471.52 496.3V509.3M475.94 496.3V509.3M480.36 496.3V509.3M484.78 496.3V509.3M489.20 496.3V509.3M493.62 496.3V509.3M498.04 496.3V509.3M502.46 496.3V509.3M506.87 496.3V509.3M511.29 496.3V509.3M515.71 496.3V509.3M520.13 496.3V509.3M524.55 496.3V509.3M528.97 496.3V509.3M533.39 496.3V509.3M537.81 496.3V509.3M542.23 496.3V509.3M546.65 496.3V509.3M551.07 496.3V509.3M555.49 496.3V509.3M559.91 496.3V509.3M564.33 496.3V509.3M568.75 496.3V509.3M573.17 496.3V509.3M577.59 496.3V509.3M582.01 496.3V509.3M586.43 496.3V509.3M590.85 496.3V509.3M595.27 496.3V509.3M599.69 496.3V509.3M604.11 496.3V509.3M608.53 496.3V509.3M612.95 496.3V509.3M617.37 496.3V509.3M621.78 496.3V509.3M626.20 496.3V509.3M630.62 496.3V509.3M635.04 496.3V509.3M639.46 496.3V509.3M643.88 496.3V509.3M648.30 496.3V509.3M652.72 496.3V509.3M657.14 496.3V509.3M661.56 496.3V509.3M665.98 496.3V509.3M670.40 496.3V509.3M674.82 496.3V509.3M679.24 496.3V509.3M683.66 496.3V509.3M688.08 496.3V509.3M692.50 496.3V509.3M696.92 496.3V509.3M701.34 496.3V509.3M705.76 496.3V509.3M710.18 496.3V509.3M714.60 496.3V509.3M719.02 496.3V509.3M723.44 496.3V509.3M727.86 496.3V509.3M732.28 496.3V509.3M736.69 496.3V509.3M741.11 496.3V509.3M745.53 496.3V509.3M749.95 496.3V509.3M754.37 496.3V509.3M758.79 496.3V509.3M763.21 496.3V509.3M767.63 496.3V509.3M772.05 496.3V509.3M776.47 496.3V509.3M780.89 496.3V509.3M785.31 496.3V509.3M789.73 496.3V509.3M794.15 496.3V509.3M798.57 496.3V509.3M802.99 496.3V509.3M807.41 496.3V509.3M811.83 496.3V509.3M816.25 496.3V509.3M820.67 496.3V509.3M825.09 496.3V509.3M829.51 496.3V509.3M833.93 496.3V509.3M838.35 496.3V509.3M842.77 496.3V509.3M847.19 496.3V509.3M851.60 496.3V509.3M856.02 496.3V509.3M860.44 496.3V509.3M864.86 496.3V509.3M869.28 496.3V509.3M873.70 496.3V509.3M878.12 496.3V509.3M882.54 496.3V509.3M886.96 496.3V509.3M891.38 496.3V509.3M895.80 496.3V509.3M900.22 496.3V509.3M904.64 496.3V509.3M909.06 496.3V509.3M913.48 496.3V509.3M917.90 496.3V509.3M922.32 496.3V509.3M926.74 496.3V509.3M931.16 496.3V509.3M935.58 496.3V509.3M940.00 496.3V509.3M944.42 496.3V509.3M948.84 496.3V509.3M953.26 496.3V509.3M957.68 496.3V509.3M962.10 496.3V509.3M966.51 496.3V509.3M970.93 496.3V509.3M975.35 496.3V509.3M979.77 496.3V509.3M984.19 496.3V509.3M988.61 496.3V509.3M993.03 496.3V509.3M997.45 496.3V509.3M1001.87 496.3V509.3M1006.29 496.3V509.3M1010.71 496.3V509.3M1015.13 496.3V509.3M1019.55 496.3V509.3M1023.97 496.3V509.3M1028.39 496.3V509.3M1032.81 496.3V509.3M1037.23 496.3V509.3M1041.65 496.3V509.3M1046.07 496.3V509.3M1050.49 496.3V509.3M1054.91 496.3V509.3M1059.33 496.3V509.3M1063.75 496.3V509.3M1068.17 496.3V509.3M1072.59 496.3V509.3M1077.01 496.3V509.3M1081.42 496.3V509.3M1085.84 496.3V509.3M1090.26 496.3V509.3M1094.68 496.3V509.3M1099.10 496.3V509.3M1103.52 496.3V509.3M1107.94 496.3V509.3M1112.36 496.3V509.3M1116.78 496.3V509.3M1121.20 496.3V509.3M1125.62 496.3V509.3M1130.04 496.3V509.3M1134.46 496.3V509.3M1138.88 496.3V509.3M1143.30 496.3V509.3M1147.72 496.3V509.3M1152.14 496.3V509.3M1156.56 496.3V509.3M1160.98 496.3V509.3M1165.40 496.3V509.3M1169.82 496.3V509.3M1174.24 496.3V509.3M1178.66 496.3V509.3M1183.08 496.3V509.3M1187.50 496.3V509.3M1191.92 496.3V509.3M1196.33 496.3V509.3M1200.75 496.3V509.3M1205.17 496.3V509.3M1209.59 496.3V509.3M1214.01 496.3V509.3M1218.43 496.3V509.3M1222.85 496.3V509.3M1227.27 496.3V509.3M1231.69 496.3V509.3M1236.11 496.3V509.3M1240.53 496.3V509.3M1244.95 496.3V509.3M1249.37 496.3V509.3M1253.79 496.3V509.3M1258.21 496.3V509.3M1262.63 496.3V509.3M1267.05 496.3V509.3M1271.47 496.3V509.3M1275.89 496.3V509.3M1280.31 496.3V509.3M1284.73 496.3V509.3M1289.15 496.3V509.3M1293.57 496.3V509.3M1297.99 496.3V509.3M1302.41 496.3V509.3M1306.83 496.3V509.3M1311.24 496.3V509.3M1315.66 496.3V509.3M1320.08 496.3V509.3M1324.50 496.3V509.3M1328.92 496.3V509.3M1333.34 496.3V509.3M1337.76 496.3V509.3M1342.18 496.3V509.3M1346.60 496.3V509.3M1351.02 496.3V509.3M1355.44 496.3V509.3M1359.86 496.3V509.3M1364.28 496.3V509.3M1368.70 496.3V509.3M1373.12 496.3V509.3M1377.54 496.3V509.3M1381.96 496.3V509.3M1386.38 496.3V509.3M1390.80 496.3V509.3M1395.22 496.3V509.3M1399.64 496.3V509.3M1404.06 496.3V509.3M1408.48 496.3V509.3M1412.90 496.3V509.3M1417.32 496.3V509.3M1421.74 496.3V509.3M1426.15 496.3V509.3M1430.57 496.3V509.3M1434.99 496.3V509.3M1439.41 496.3V509.3M1443.83 496.3V509.3M1448.25 496.3V509.3M1452.67 496.3V509.3M1457.09 496.3V509.3M1461.51 496.3V509.3M1465.93 496.3V509.3M1470.35 496.3V509.3M1474.77 496.3V509.3M1479.19 496.3V509.3M1483.61 496.3V509.3M1488.03 496.3V509.3M1492.45 496.3V509.3M1496.87 496.3V509.3M1501.29 496.3V509.3M1505.71 496.3V509.3M1510.13 496.3V509.3M1514.55 496.3V509.3M1518.97 496.3V509.3M1523.39 496.3V509.3M1527.81 496.3V509.3M1532.23 496.3V509.3M1536.65 496.3V509.3M1541.06 496.3V509.3M1545.48 496.3V509.3M1549.90 496.3V509.3M1554.32 496.3V509.3M1558.74 496.3V509.3M1563.16 496.3V509.3M1567.58 496.3V509.3M1572.00 496.3V509.3M1576.42 496.3V509.3M1580.84 496.3V509.3M1585.26 496.3V509.3M1589.68 496.3V509.3M1594.10 496.3V509.3M1598.52 496.3V509.3M1602.94 496.3V509.3M1607.36 496.3V509.3M1611.78 496.3V509.3M1616.20 496.3V509.3M1620.62 496.3V509.3M1625.04 496.3V509.3M1629.46 496.3V509.3M1633.88 496.3V509.3M1638.30 496.3V509.3M1642.72 496.3V509.3M1647.14 496.3V509.3M1651.56 496.3V509.3M1655.97 496.3V509.3M1660.39 496.3V509.3M1664.81 496.3V509.3M1669.23 496.3V509.3M1673.65 496.3V509.3M1678.07 496.3V509.3M1682.49 496.3V509.3M1686.91 496.3V509.3M1691.33 496.3V509.3M1695.75 496.3V509.3M1700.17 496.3V509.3M1704.59 496.3V509.3M1709.01 496.3V509.3M1713.43 496.3V509.3M1717.85 496.3V509.3M1722.27 496.3V509.3M1726.69 496.3V509.3M1731.11 496.3V509.3M1735.53 496.3V509.3M1739.95 496.3V509.3M1744.37 496.3V509.3M1748.79 496.3V509.3M1753.21 496.3V509.3M1757.63 496.3V509.3M1762.05 496.3V509.3M1766.47 496.3V509.3M1770.88 496.3V509.3M1775.30 496.3V509.3M1779.72 496.3V509.3M1784.14 496.3V509.3M1788.56 496.3V509.3M1792.98 496.3V509.3M1797.40 496.3V509.3M1801.82 496.3V509.3M1806.24 496.3V509.3M1810.66 496.3V509.3M1815.08 496.3V509.3M1819.50 496.3V509.3M1823.92 496.3V509.3M1828.34 496.3V509.3M1832.76 496.3V509.3M1837.18 496.3V509.3M1841.60 496.3V509.3M1846.02 496.3V509.3M1850.44 496.3V509.3M1854.86 496.3V509.3M1859.28 496.3V509.3M1863.70 496.3V509.3M1868.12 496.3V509.3M1872.54 496.3V509.3M1876.96 496.3V509.3M1881.38 496.3V509.3M1885.79 496.3V509.3M1890.21 496.3V509.3M1894.63 496.3V509.3M1899.05 496.3V509.3M1903.47 496.3V509.3M1907.89 496.3V509.3M1912.31 496.3V509.3M1916.73 496.3V509.3M1921.15 496.3V509.3M1925.57 496.3V509.3M1929.99 496.3V509.3M1934.41 496.3V509.3M1938.83 496.3V509.3M1943.25 496.3V509.3M1947.67 496.3V509.3M1952.09 496.3V509.3M1956.51 496.3V509.3M1960.93 496.3V509.3M1965.35 496.3V509.3M1969.77 496.3V509.3" stroke="#000" stroke-width="2"/>
<text x="218.6" y="534" font-size="21.400" text-anchor="middle" fill="#000">2014-01</text>
<text x="332.0" y="530" font-size="18" text-anchor="middle" fill="#000">2014-27</text>
<text x="448.4" y="534" font-size="21.400" text-anchor="middle" fill="#000">2015-01</text>
<text x="561.8" y="530" font-size="18" text-anchor="middle" fill="#000">2015-27</text>
<text x="678.2" y="534" font-size="21.400" text-anchor="middle" fill="#000">2016-01</text>
<text x="791.6" y="530" font-size="18" text-anchor="middle" fill="#000">2016-27</text>
<text x="908.1" y="534" font-size="21.400" text-anchor="middle" fill="#000">2017-01</text>
<text x="1021.5" y="530" font-size="18" text-anchor="middle" fill="#000">2017-27</text>
<text x="1137.9" y="534" font-size="21.400" text-anchor="middle" fill="#000">2018-01</text>
<text x="1251.3" y="530" font-size="18" text-anchor="middle" fill="#000">2018-27</text>
<text x="1367.7" y="534" font-size="21.400" text-anchor="middle" fill="#000">2019-01</text>
<text x="1481.1" y="530" font-size="18" text-anchor="middle" fill="#000">2019-27</text>
<text x="1597.5" y="534" font-size="21.400" text-anchor="middle" fill="#000">2020-01</text>
<text x="1710.9" y="530" font-size="18" text-anchor="middle" fill="#000">2020-27</text>
<text x="1827.3" y="534" font-size="21.400" text-anchor="middle" fill="#000">2021-01</text>
<text x="1940.7" y="530" font-size="18" text-anchor="middle" fill="#000">2021-27</text>
<path d="M334.51 478.3V509.3M449.42 478.3V509.3M564.33 478.3V509.3M679.24 478.3V509.3M794.15 478.3V509.3M909.06 478.3V509.3M1023.97 478.3V509.3M1138.88 478.3V509.3M1253.79 478.3V509.3M1368.70 478.3V509.3M1483.61 478.3V509.3M1598.52 478.3V509.3M1713.43 478.3V509.3M1828.34 478.3V509.3M1943.25 478.3V509.3" stroke="#000" stroke-width="2"/>
<rect x="670.3" y="550.5" width="42" height="25.500" fill="#3FCC3F"/>
<text x="730.3" y="576" font-size="26" fill="#000">Historia</text>
<rect x="938.3" y="550.5" width="42" height="25.500" fill="#AA2222"/>
<text x="998.3" y="576" font-size="26" fill="#000">Pronóstico</text>
<rect x="1242.3" y="550.5" width="42" height="25.500" fill="#86BF92"/>
<text x="1301.3" y="576" font-size="26" fill="#000">Tendencia-ciclo</text>
<text x="1099" y="51.8" font-size="25.700" text-anchor="middle" fill="#000">C-6 - 6 Packs 12 Ounce Cans</text>
</svg>
<!-- p6_dialogs -->
<div class="a" style="left:876.5px;top:395px;width:1034.5px;height:786px;background:#787C84;"></div>
<div class="a" style="left:878.5px;top:397px;width:1030.5px;height:782px;background:#F0F0F0;"></div>
<div class="a" style="left:878.5px;top:397px;width:1030.5px;height:59.8px;background:#2B579A;"></div>
<div class="a" style="top:419.1px;font-size:22px;line-height:29px;color:#DCE1EA;white-space:pre;letter-spacing:0.73px;left:902.4px;">Configuración de Modelo de Componentes</div>
<svg class="a" style="left:1866px;top:411px" width="15" height="15"><path d="M1.500 1.500l12 12M13.500 1.500l-12 12" stroke="#D5DAE3" stroke-width="2.800"/></svg>
<div class="a" style="left:915.6px;top:477.5px;font-size:24px;line-height:31px;color:#3C3C3C;white-space:pre;transform:scaleX(0.8388);transform-origin:0 50%;">Nombre</div>
<div class="a" style="left:915.6px;top:529.1px;font-size:24px;line-height:31px;color:#3C3C3C;white-space:pre;transform:scaleX(0.8741);transform-origin:0 50%;">Descripción</div>
<div class="a" style="left:915.6px;top:659.4px;font-size:24px;line-height:31px;color:#3C3C3C;white-space:pre;transform:scaleX(0.8726);transform-origin:0 50%;">Valor de inicio</div>
<div class="a" style="left:915.6px;top:763.1px;font-size:24px;line-height:31px;color:#3C3C3C;white-space:pre;transform:scaleX(0.9175);transform-origin:0 50%;">Tendencia</div>
<div class="a" style="left:1053.6px;top:715.5px;font-size:24px;line-height:31px;color:#3C3C3C;white-space:pre;transform:scaleX(0.8664);transform-origin:0 50%;">Valor</div>
<div class="a" style="left:1113.4px;top:478.9px;width:226px;height:42px;background:#E3E3E3;box-sizing:border-box;border:2px solid #ADADAD;"></div>
<div class="a" style="left:1120.4px;top:486.2px;font-size:23px;line-height:30px;color:#000;white-space:pre;transform:scaleX(0.9300);transform-origin:0 50%;">Componente01</div>
<svg class="a" style="left:1311.4px;top:495.4px" width="18" height="11"><path d="M1.500 1.500l7.500 7 7.500-7" fill="none" stroke="#606060" stroke-width="1.800"/></svg>
<div class="a" style="left:1113.4px;top:531.5px;width:225px;height:117px;background:#FDFDFD;box-sizing:border-box;border:1.500px solid #D4D4D4;"></div>
<div class="a" style="left:1113.4px;top:661px;width:226px;height:41.8px;background:#E3E3E3;box-sizing:border-box;border:2px solid #ADADAD;"></div>
<div class="a" style="left:1120.4px;top:668.2px;font-size:23px;line-height:30px;color:#000;white-space:pre;transform:scaleX(0.9300);transform-origin:0 50%;">Automático</div>
<svg class="a" style="left:1311.4px;top:677.4px" width="18" height="11"><path d="M1.500 1.500l7.500 7 7.500-7" fill="none" stroke="#606060" stroke-width="1.800"/></svg>
<div class="a" style="left:1113.4px;top:713.4px;width:225px;height:38.6px;background:#F4F4F4;box-sizing:border-box;border:1.500px solid #CDCDCD;"></div>
<div class="a" style="top:718.5px;font-size:22px;line-height:29px;color:#8A8A8A;white-space:pre;letter-spacing:0.5px;left:1124px;">645</div>
<div class="a" style="left:1113.4px;top:765.4px;width:226px;height:41.4px;background:#E3E3E3;box-sizing:border-box;border:2px solid #ADADAD;"></div>
<div class="a" style="left:1120.4px;top:772.4px;font-size:23px;line-height:30px;color:#000;white-space:pre;transform:scaleX(0.9300);transform-origin:0 50%;">Lineal</div>
<svg class="a" style="left:1311.4px;top:781.6px" width="18" height="11"><path d="M1.500 1.500l7.500 7 7.500-7" fill="none" stroke="#606060" stroke-width="1.800"/></svg>
<svg class="a" style="left:917px;top:825.3px" width="22" height="22"><circle cx="11" cy="11" r="9.800" fill="#fff" stroke="#BDBDBD" stroke-width="1.800"/><circle cx="11" cy="11" r="4.300" fill="#9A9A9A"/></svg>
<div class="a" style="left:945.5px;top:821.2px;font-size:24px;line-height:31px;color:#ABABAB;white-space:pre;transform:scaleX(0.8677);transform-origin:0 50%;">Pendiente</div>
<div class="a" style="left:1139px;top:817.3px;width:120px;height:38.5px;background:#F6F6F6;box-sizing:border-box;border:2px solid #CDCDCD;"></div>
<div class="a" style="left:1149.5px;top:822.3px;font-size:23px;line-height:30px;color:#9A9A9A;white-space:pre;transform:scaleX(0.9300);transform-origin:0 50%;">-0.05</div>
<svg class="a" style="left:917px;top:877.22px" width="22" height="22"><circle cx="11" cy="11" r="9.800" fill="#fff" stroke="#BDBDBD" stroke-width="1.800"/></svg>
<div class="a" style="left:945.5px;top:873.12px;font-size:24px;line-height:31px;color:#ABABAB;white-space:pre;transform:scaleX(0.8576);transform-origin:0 50%;">Valor final</div>
<div class="a" style="left:1139px;top:869.22px;width:120px;height:38.5px;background:#F6F6F6;box-sizing:border-box;border:2px solid #CDCDCD;"></div>
<div class="a" style="left:1149.5px;top:874.22px;font-size:23px;line-height:30px;color:#9A9A9A;white-space:pre;transform:scaleX(0.9300);transform-origin:0 50%;">645</div>
<svg class="a" style="left:917px;top:929.14px" width="22" height="22"><circle cx="11" cy="11" r="9.800" fill="#fff" stroke="#BDBDBD" stroke-width="1.800"/></svg>
<div class="a" style="left:945.5px;top:925.04px;font-size:24px;line-height:31px;color:#ABABAB;white-space:pre;transform:scaleX(0.8680);transform-origin:0 50%;">Por ciento</div>
<div class="a" style="left:1139px;top:921.14px;width:120px;height:38.5px;background:#F6F6F6;box-sizing:border-box;border:2px solid #CDCDCD;"></div>
<div class="a" style="left:1149.5px;top:926.14px;font-size:23px;line-height:30px;color:#9A9A9A;white-space:pre;transform:scaleX(0.9300);transform-origin:0 50%;">10</div>
<svg class="a" style="left:917px;top:981.06px" width="22" height="22"><circle cx="11" cy="11" r="9.800" fill="#fff" stroke="#BDBDBD" stroke-width="1.800"/></svg>
<div class="a" style="left:945.5px;top:976.96px;font-size:24px;line-height:31px;color:#ABABAB;white-space:pre;transform:scaleX(0.8895);transform-origin:0 50%;">Total pronósticos</div>
<div class="a" style="left:1139px;top:973.06px;width:120px;height:38.5px;background:#F6F6F6;box-sizing:border-box;border:2px solid #CDCDCD;"></div>
<div class="a" style="left:1149.5px;top:978.06px;font-size:23px;line-height:30px;color:#9A9A9A;white-space:pre;transform:scaleX(0.9300);transform-origin:0 50%;">33000</div>
<svg class="a" style="left:917px;top:1032.98px" width="22" height="22"><circle cx="11" cy="11" r="9.800" fill="#fff" stroke="#BDBDBD" stroke-width="1.800"/></svg>
<div class="a" style="left:945.5px;top:1028.88px;font-size:24px;line-height:31px;color:#ABABAB;white-space:pre;transform:scaleX(0.8888);transform-origin:0 50%;">Año Actual</div>
<div class="a" style="left:1139px;top:1024.98px;width:120px;height:38.5px;background:#F6F6F6;box-sizing:border-box;border:2px solid #CDCDCD;"></div>
<div class="a" style="left:1149.5px;top:1029.98px;font-size:23px;line-height:30px;color:#9A9A9A;white-space:pre;transform:scaleX(0.9300);transform-origin:0 50%;">33000</div>
<div class="a" style="left:1451px;top:477.5px;font-size:24px;line-height:31px;color:#3C3C3C;white-space:pre;transform:scaleX(0.8791);transform-origin:0 50%;">Índices estacionales</div>
<div class="a" style="left:1677px;top:478.9px;width:198px;height:42px;background:#E3E3E3;box-sizing:border-box;border:2px solid #ADADAD;"></div>
<div class="a" style="left:1684px;top:486.2px;font-size:23px;line-height:30px;color:#000;white-space:pre;transform:scaleX(0.9265);transform-origin:0 50%;">Automático</div>
<svg class="a" style="left:1847px;top:495.4px" width="18" height="11"><path d="M1.500 1.500l7.500 7 7.500-7" fill="none" stroke="#606060" stroke-width="1.800"/></svg>
<div class="a" style="left:1618px;top:531.5px;width:257px;height:164.3px;background:#fff;box-sizing:border-box;border:2px solid #868B94;"></div>
<div class="a" style="left:1667.7px;top:544.5px;font-size:22px;line-height:29px;color:#000;white-space:pre;transform:scaleX(0.9811);transform-origin:0 50%;">Indice</div>
<div class="a" style="left:1759.5px;top:535.5px;width:1.5px;height:47px;background:#E5E5E5;"></div>
<div class="a" style="left:1633px;top:535.5px;width:1.5px;height:47px;background:#E5E5E5;"></div>
<div class="a" style="left:1674.7px;top:585.9px;font-size:22.5px;line-height:29px;color:#000;white-space:pre;transform:scaleX(0.9864);transform-origin:0 50%;">0.88</div>
<div class="a" style="left:1680.65px;top:620.2px;font-size:22.5px;line-height:29px;color:#000;white-space:pre;transform:scaleX(1.0006);transform-origin:0 50%;">0.8</div>
<div class="a" style="left:1674.3px;top:654.7px;font-size:22.5px;line-height:29px;color:#000;white-space:pre;transform:scaleX(1.0047);transform-origin:0 50%;">0.72</div>
<div class="a" style="left:1838.5px;top:534.5px;width:31px;height:158.3px;background:#F0F0F0;"></div>
<div class="a" style="left:1839px;top:569.5px;width:30px;height:33.1px;background:#CDCDCD;"></div>
<svg class="a" style="left:1847px;top:547.5px" width="15" height="12"><path d="M1.500 9.500l6-6.500 6 6.500" fill="none" stroke="#606060" stroke-width="3.400"/></svg>
<svg class="a" style="left:1847px;top:670.8px" width="15" height="12"><path d="M1.500 2.500l6 6.500 6-6.500" fill="none" stroke="#606060" stroke-width="3.400"/></svg>
<div class="a" style="left:1677px;top:727px;width:198px;height:41.8px;background:#E3E3E3;box-sizing:border-box;border:2px solid #ADADAD;"></div>
<div class="a" style="left:1684px;top:734.2px;font-size:23px;line-height:30px;color:#000;white-space:pre;transform:scaleX(0.9097);transform-origin:0 50%;">Holidays and Fe</div>
<svg class="a" style="left:1847px;top:743.4px" width="18" height="11"><path d="M1.500 1.500l7.500 7 7.500-7" fill="none" stroke="#606060" stroke-width="1.800"/></svg>
<div class="a" style="left:1677px;top:788.4px;width:198px;height:42.2px;background:#E3E3E3;box-sizing:border-box;border:2px solid #ADADAD;"></div>
<div class="a" style="left:1684px;top:795.8px;font-size:23px;line-height:30px;color:#000;white-space:pre;transform:scaleX(0.9117);transform-origin:0 50%;">Personalizado y</div>
<svg class="a" style="left:1847px;top:805px" width="18" height="11"><path d="M1.500 1.500l7.500 7 7.500-7" fill="none" stroke="#606060" stroke-width="1.800"/></svg>
<div class="a" style="left:1618px;top:852px;width:257px;height:164.5px;background:#fff;box-sizing:border-box;border:2px solid #868B94;"></div>
<div class="a" style="left:1667.7px;top:865px;font-size:22px;line-height:29px;color:#000;white-space:pre;transform:scaleX(0.9811);transform-origin:0 50%;">Indice</div>
<div class="a" style="left:1759.5px;top:856px;width:1.5px;height:47px;background:#E5E5E5;"></div>
<div class="a" style="left:1633px;top:856px;width:1.5px;height:47px;background:#E5E5E5;"></div>
<div class="a" style="left:1674.5px;top:906.2px;font-size:22.5px;line-height:29px;color:#000;white-space:pre;transform:scaleX(0.9956);transform-origin:0 50%;">1.76</div>
<div class="a" style="left:1674.5px;top:940.7px;font-size:22.5px;line-height:29px;color:#000;white-space:pre;transform:scaleX(0.9956);transform-origin:0 50%;">1.32</div>
<div class="a" style="left:1686.8px;top:975.2px;font-size:22.5px;line-height:29px;color:#000;white-space:pre;transform:scaleX(1.0125);transform-origin:0 50%;">1.</div>
<div class="a" style="left:1838.5px;top:855px;width:31px;height:158.5px;background:#F0F0F0;"></div>
<div class="a" style="left:1839px;top:911px;width:30px;height:67px;background:#CDCDCD;"></div>
<svg class="a" style="left:1847px;top:868px" width="15" height="12"><path d="M1.500 9.500l6-6.500 6 6.500" fill="none" stroke="#606060" stroke-width="3.400"/></svg>
<svg class="a" style="left:1847px;top:991.5px" width="15" height="12"><path d="M1.500 2.500l6 6.500 6-6.500" fill="none" stroke="#606060" stroke-width="3.400"/></svg>
<div class="a" style="left:1275px;top:1096.8px;width:132.3px;height:46.2px;background:#FCFCFC;box-sizing:border-box;border:2.400px solid #12509E;"></div>
<div class="a" style="left:1325.05px;top:1104.2px;font-size:24px;line-height:31px;color:#3C3C3C;white-space:pre;transform:scaleX(0.9026);transform-origin:0 50%;">OK</div>
<div class="a" style="left:1431.4px;top:1096.8px;width:131.5px;height:46.2px;background:#FCFCFC;box-sizing:border-box;border:2px solid #ADADAD;"></div>
<div class="a" style="left:1454.2px;top:1104.2px;font-size:24px;line-height:31px;color:#3C3C3C;white-space:pre;transform:scaleX(0.8849);transform-origin:0 50%;">Cancelar</div>
<div class="a" style="left:1587px;top:1096.8px;width:132.4px;height:46.2px;background:#FCFCFC;box-sizing:border-box;border:2px solid #ADADAD;"></div>
<div class="a" style="left:1620.75px;top:1104.2px;font-size:24px;line-height:31px;color:#3C3C3C;white-space:pre;transform:scaleX(0.8724);transform-origin:0 50%;">Aplicar</div>
<div class="a" style="left:1743px;top:1096.8px;width:131.9px;height:46.2px;background:#FCFCFC;box-sizing:border-box;border:2px solid #ADADAD;"></div>
<div class="a" style="left:1779.2px;top:1104.2px;font-size:24px;line-height:31px;color:#3C3C3C;white-space:pre;transform:scaleX(0.8666);transform-origin:0 50%;">Ayuda</div>
<div class="a" style="left:1154.5px;top:498.8px;width:476px;height:578.2px;background:#787C84;"></div>
<div class="a" style="left:1156.5px;top:500.8px;width:472px;height:574.2px;background:#F0F0F0;"></div>
<div class="a" style="left:1156.5px;top:500.8px;width:472px;height:60px;background:#2B579A;"></div>
<div class="a" style="top:522.5px;font-size:22px;line-height:29px;color:#DCE1EA;white-space:pre;letter-spacing:0.19px;left:1180.2px;">Editar índices</div>
<div class="a" style="left:1193.4px;top:583px;width:400px;height:384px;background:#fff;"></div>
<div class="a" style="left:1193.4px;top:583px;width:397.5px;height:381.5px;background:#696969;"></div>
<div class="a" style="left:1196.4px;top:586px;width:394.5px;height:378.5px;background:#E3E3E3;"></div>
<div class="a" style="left:1198px;top:588px;width:393px;height:377px;background:#F0F0F0;"></div>
<div class="a" style="left:1198.4px;top:589px;width:392.1px;height:37px;background:#000;"></div>
<div class="a" style="left:1198.4px;top:589.3px;width:192.4px;height:34.2px;background:#F0F0F0;"></div>
<div class="a" style="left:1393.8px;top:589.3px;width:194.2px;height:34.2px;background:#F0F0F0;"></div>
<div class="a" style="left:1198.4px;top:589.300px;width:191.9px;height:34px;overflow:hidden"><div class="a" style="top:2px;font-size:22px;line-height:29px;color:#000;white-space:pre;font-weight:bold;letter-spacing:0.59px;left:8.5px;">Código de event</div></div>
<div class="a" style="top:592.5px;font-size:22px;line-height:29px;color:#000;white-space:pre;font-weight:bold;letter-spacing:0.15px;left:1402.86px;">Índice de Evento</div>
<div class="a" style="left:1197.4px;top:625.5px;width:393.1px;height:129.8px;background:#6A6A6A;"></div>
<div class="a" style="left:1199.4px;top:626.5px;width:192.4px;height:30.4px;background:#fff;"></div>
<div class="a" style="left:1394.3px;top:626.5px;width:194.2px;height:30.4px;background:#fff;"></div>
<div class="a" style="top:627.2px;font-size:20.5px;line-height:27px;color:#000;white-space:pre;left:1233.63px;">Memorial Day</div>
<div class="a" style="top:627.2px;font-size:21px;line-height:27px;color:#000;white-space:pre;letter-spacing:0.3px;left:1470.51px;">1.38</div>
<div class="a" style="left:1199.4px;top:658.9px;width:192.4px;height:29.8px;background:#fff;"></div>
<div class="a" style="left:1394.3px;top:658.9px;width:194.2px;height:29.8px;background:#fff;"></div>
<div class="a" style="top:659.3px;font-size:20.5px;line-height:27px;color:#000;white-space:pre;left:1250.13px;">4th of July</div>
<div class="a" style="top:659.3px;font-size:21px;line-height:27px;color:#000;white-space:pre;letter-spacing:0.3px;left:1470.51px;">1.76</div>
<div class="a" style="left:1199.4px;top:690.7px;width:192.4px;height:29.7px;background:#fff;"></div>
<div class="a" style="left:1394.3px;top:690.7px;width:194.2px;height:29.7px;background:#fff;"></div>
<div class="a" style="top:691.05px;font-size:20.5px;line-height:27px;color:#000;white-space:pre;left:1249.56px;">Labor Day</div>
<div class="a" style="top:691.05px;font-size:21px;line-height:27px;color:#000;white-space:pre;letter-spacing:0.3px;left:1470.51px;">1.32</div>
<div class="a" style="left:1199.4px;top:722.4px;width:192.4px;height:30.4px;background:#fff;"></div>
<div class="a" style="left:1394.3px;top:722.4px;width:194.2px;height:30.4px;background:#fff;"></div>
<div class="a" style="top:723.1px;font-size:20.5px;line-height:27px;color:#000;white-space:pre;left:1256.42px;">City Fest</div>
<div class="a" style="top:723.1px;font-size:21px;line-height:27px;color:#000;white-space:pre;letter-spacing:0.3px;left:1470.51px;">1.20</div>
<div class="a" style="left:1392.8px;top:720.4px;width:198.7px;height:36.4px;box-sizing:border-box;border:2.600px solid #000;border-bottom-width:4px;background:transparent;"></div>
<div class="a" style="left:1213px;top:998.7px;width:126.3px;height:39.7px;background:#FCFCFC;box-sizing:border-box;border:2.400px solid #12509E;"></div>
<div class="a" style="left:1260.05px;top:1002.85px;font-size:24px;line-height:31px;color:#3C3C3C;white-space:pre;transform:scaleX(0.9026);transform-origin:0 50%;">OK</div>
<div class="a" style="left:1447px;top:998.7px;width:126.3px;height:39.7px;background:#FCFCFC;box-sizing:border-box;border:2px solid #ADADAD;"></div>
<div class="a" style="left:1467.2px;top:1002.85px;font-size:24px;line-height:31px;color:#3C3C3C;white-space:pre;transform:scaleX(0.8849);transform-origin:0 50%;">Cancelar</div>
</body></html>
